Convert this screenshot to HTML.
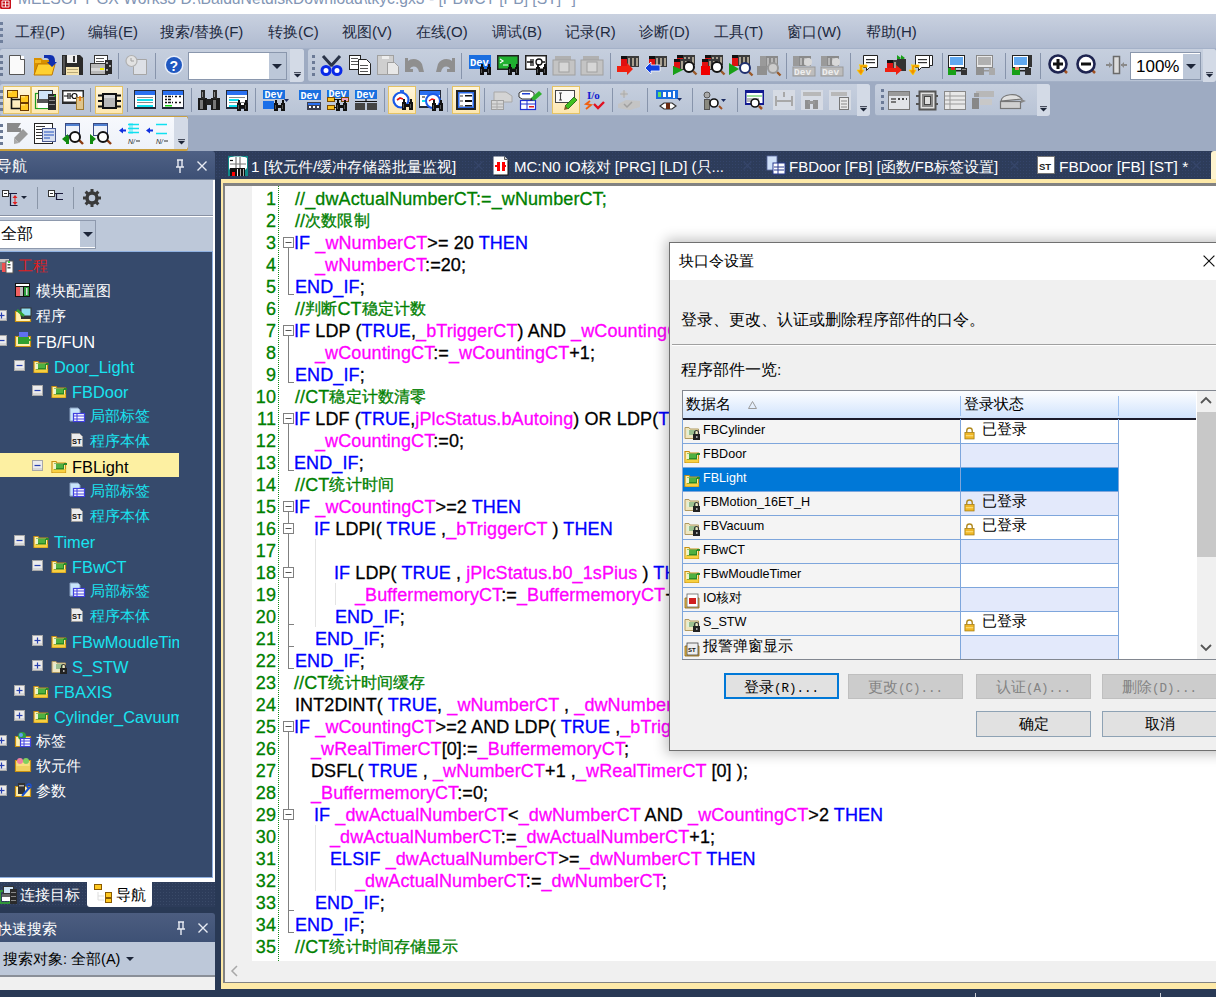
<!DOCTYPE html><html><head><meta charset="utf-8"><style>
*{margin:0;padding:0;box-sizing:border-box}
html,body{width:1216px;height:997px;overflow:hidden}
body{position:relative;background:#293955;font-family:"Liberation Sans",sans-serif;color:#000}
.a{position:absolute}
.t{white-space:pre}
svg{position:absolute;overflow:visible}
.code{position:absolute;font-size:18px;line-height:22px;height:22px;white-space:pre;letter-spacing:0.1px;-webkit-text-stroke:0.3px currentColor}
.k{color:#0000ff}.v{color:#ff00ff}.c{color:#008000}.n{color:#000}
.cj{font-size:15.7px;font-weight:300;position:relative;top:-1px}
.tree{position:absolute;font-size:16.4px;line-height:20px;white-space:pre;color:#fff}
.cy{color:#18e4f0}
</style></head><body><div class="a" style="left:0px;top:0px;width:1216px;height:14px;background:#fff;overflow:hidden"><svg style="position:absolute;left:0;top:0" width="12" height="10" viewBox="0 0 12 10"><rect x="0" y="-3" width="11" height="12" rx="1.5" fill="#c8101a"/><path d="M2 1h7v6H2zM5.5 1v6M2 4h7" fill="none" stroke="#fff" stroke-width="0.9"/></svg><div style="position:absolute;left:18px;top:-10px;font-size:15.7px;color:#8396b5;white-space:pre">MELSOFT GX Works3 D:\BaiduNetdiskDownload\tkyc.gx3 - [FBwCT [FB] [ST] *]</div></div>
<div class="a" style="left:0px;top:14px;width:1216px;height:35px;background:linear-gradient(#c9d1e0,#b0bbd0);border-bottom:1px solid #a4b1c8"></div>
<div class="a" style="left:0px;top:22px;width:3px;height:3px;background:#6f7f9c"></div>
<div class="a" style="left:0px;top:28px;width:3px;height:3px;background:#6f7f9c"></div>
<div class="a" style="left:0px;top:34px;width:3px;height:3px;background:#6f7f9c"></div>
<div class="a" style="left:0px;top:40px;width:3px;height:3px;background:#6f7f9c"></div>
<div class="a t" style="left:15px;top:23px;font-size:15px;color:#1e2a40;line-height:18px">工程(P)</div>
<div class="a t" style="left:88px;top:23px;font-size:15px;color:#1e2a40;line-height:18px">编辑(E)</div>
<div class="a t" style="left:160px;top:23px;font-size:15px;color:#1e2a40;line-height:18px">搜索/替换(F)</div>
<div class="a t" style="left:268px;top:23px;font-size:15px;color:#1e2a40;line-height:18px">转换(C)</div>
<div class="a t" style="left:342px;top:23px;font-size:15px;color:#1e2a40;line-height:18px">视图(V)</div>
<div class="a t" style="left:416px;top:23px;font-size:15px;color:#1e2a40;line-height:18px">在线(O)</div>
<div class="a t" style="left:492px;top:23px;font-size:15px;color:#1e2a40;line-height:18px">调试(B)</div>
<div class="a t" style="left:565px;top:23px;font-size:15px;color:#1e2a40;line-height:18px">记录(R)</div>
<div class="a t" style="left:639px;top:23px;font-size:15px;color:#1e2a40;line-height:18px">诊断(D)</div>
<div class="a t" style="left:714px;top:23px;font-size:15px;color:#1e2a40;line-height:18px">工具(T)</div>
<div class="a t" style="left:787px;top:23px;font-size:15px;color:#1e2a40;line-height:18px">窗口(W)</div>
<div class="a t" style="left:866px;top:23px;font-size:15px;color:#1e2a40;line-height:18px">帮助(H)</div>
<div class="a" style="left:0px;top:49px;width:1216px;height:102px;background:#9eabc2"></div>
<div class="a" style="left:0px;top:49px;width:304px;height:33px;background:linear-gradient(#c6cfde,#b9c4d6);border-bottom:1px solid #a3b0c6;border-radius:3px"></div>
<div class="a" style="left:308px;top:49px;width:908px;height:33px;background:linear-gradient(#c6cfde,#b9c4d6);border-bottom:1px solid #a3b0c6;border-radius:3px"></div>
<div class="a" style="left:0px;top:55px;width:3px;height:3px;background:#6b7a96"></div>
<div class="a" style="left:0px;top:61px;width:3px;height:3px;background:#6b7a96"></div>
<div class="a" style="left:0px;top:67px;width:3px;height:3px;background:#6b7a96"></div>
<div class="a" style="left:0px;top:73px;width:3px;height:3px;background:#6b7a96"></div>
<div class="a" style="left:118px;top:53px;width:1px;height:26px;background:#8794ab"></div>
<div class="a" style="left:155px;top:53px;width:1px;height:26px;background:#8794ab"></div>
<div class="a" style="left:188px;top:52px;width:99px;height:28px;background:#fff;border:1px solid #8a97ad"><div style="position:absolute;right:0;top:0;width:17px;height:26px;background:#bcc7d8"></div><div style="position:absolute;right:4px;top:11px;width:0;height:0;border-left:5px solid transparent;border-right:5px solid transparent;border-top:5px solid #1c2538"></div></div>
<div class="a" style="left:290px;top:49px;width:14px;height:33px;background:#d3dae6;border-radius:0 3px 3px 0"></div>
<svg style="left:293.5px;top:72px" width="7" height="6" viewBox="0 0 7 6"><rect x="0" y="0" width="7" height="1.2" fill="#4a5060"/><path d="M0 2h7l-3.5 3.5z" fill="#1c2538"/></svg>
<div class="a" style="left:312px;top:55px;width:3px;height:3px;background:#6b7a96"></div>
<div class="a" style="left:312px;top:61px;width:3px;height:3px;background:#6b7a96"></div>
<div class="a" style="left:312px;top:67px;width:3px;height:3px;background:#6b7a96"></div>
<div class="a" style="left:312px;top:73px;width:3px;height:3px;background:#6b7a96"></div>
<svg style="left:0;top:0" width="1216" height="997" viewBox="0 0 1216 997"><path d="M9.5 55.5h11l4 4v15h-15z" fill="#fafafa" stroke="#555" stroke-width="1"/><path d="M20.5 55.5v4h4" fill="#d8d8d8" stroke="#555" stroke-width="1"/><rect x="21" y="56" width="3" height="3" fill="#fff" /><path d="M34 58h7l2 2h9v15H34z" fill="#d89000" /><path d="M38 64h17l-3 11H34z" fill="#ffd030" stroke="#c07800" stroke-width="1"/><rect x="35" y="60" width="6" height="3" fill="#f5b820" /><path d="M44 55h6c4 0 5 3 5 6v1h2l-5 5-5-5h2v-1c0-2-1-3-3-3h-2z" fill="#1030b0" /><path d="M62 55h18l3 3v17H62z" fill="#2a2a2a" /><rect x="67" y="55" width="10" height="8" fill="#eee" /><rect x="73" y="56" width="2" height="6" fill="#333" /><rect x="66" y="67" width="13" height="8" fill="#f5e4b0" /><rect x="67" y="69" width="11" height="1" fill="#b8a878" /><rect x="67" y="72" width="11" height="1" fill="#b8a878" /><rect x="63" y="56" width="2" height="18" fill="#555" /><rect x="94.5" y="55.5" width="13" height="8" fill="#fff" stroke="#333" stroke-width="1"/><rect x="96" y="58" width="8" height="1" fill="#555" /><rect x="96" y="61" width="8" height="1" fill="#555" /><rect x="90.5" y="63.5" width="17" height="11" fill="#b8b8b8" stroke="#333" stroke-width="1"/><rect x="91" y="68" width="16" height="3" fill="#d8d8d8" /><rect x="100" y="68" width="4" height="2" fill="#f8f000" /><rect x="105" y="60" width="7" height="14" fill="#2a2a2a" /><rect x="106" y="62" width="2" height="2" fill="#aaa" /><rect x="109" y="65" width="2" height="2" fill="#aaa" /><rect x="106" y="69" width="2" height="2" fill="#aaa" /><path d="M133.5 59.5h13v15h-13z" fill="#dde0e6" stroke="#a6a6a6" stroke-width="1"/><circle cx="131.5" cy="61" r="5.5" fill="#e2e2e2" stroke="#b0b0b0" stroke-width="1.2"/><path d="M131 58v3h3" fill="none" stroke="#a0a0a0" stroke-width="1" /><circle cx="174" cy="65" r="9.5" fill="#e8eefa" /><circle cx="174" cy="65" r="8" fill="#2058c0" /><text x="169.5" y="70.5" font-family="Liberation Sans" font-weight="bold" font-size="14" fill="#fff">?</text><path d="M323 56l9 10M340 56l-9 10" fill="none" stroke="#2a3448" stroke-width="3" /><circle cx="326" cy="70.5" r="4" fill="#fff" stroke="#0a2ae8" stroke-width="3"/><circle cx="337" cy="70.5" r="4" fill="#fff" stroke="#0a2ae8" stroke-width="3"/><rect x="349.5" y="55.5" width="11" height="14" fill="#fff" stroke="#222" stroke-width="1"/><rect x="351" y="58" width="7" height="1" fill="#555" /><rect x="351" y="61" width="7" height="1" fill="#555" /><rect x="351" y="64" width="7" height="1" fill="#555" /><path d="M358.5 59.5h8l4 4v11h-12z" fill="#fff" stroke="#222" stroke-width="1"/><rect x="360" y="65" width="8" height="1" fill="#555" /><rect x="360" y="68" width="8" height="1" fill="#555" /><rect x="360" y="71" width="8" height="1" fill="#555" /><rect x="377.5" y="55.5" width="16" height="19" fill="#cfcfcf" stroke="#a0a0a0" stroke-width="1"/><rect x="382" y="56" width="7" height="3" fill="#eee" /><path d="M387.5 62.5h7l4 4v8h-11z" fill="#e8e8e8" stroke="#a0a0a0" stroke-width="1"/><path d="M405 58h3v3c3-3 11-3 14 3l2 8h-5c-1-6-7-7-9-3h3v3h-8z" fill="#8f8f8f" /><path d="M455 58h-3v3c-3-3-11-3-14 3l-2 8h5c1-6 7-7 9-3h-3v3h8z" fill="#8f8f8f" /><rect x="469" y="55" width="22" height="14" fill="#1a6ee0" /><text x="470" y="66" font-family="Liberation Mono" font-weight="bold" font-size="10.5" fill="#fff">Dev</text><rect x="480" y="67" width="4" height="8" fill="#111" /><rect x="487" y="67" width="4" height="8" fill="#111" /><rect x="483" y="69" width="5" height="3" fill="#111" /><rect x="481" y="64" width="2" height="4" fill="#111" /><rect x="488" y="64" width="2" height="4" fill="#111" /><rect x="481" y="69" width="1" height="4" fill="#555" /><rect x="488" y="69" width="1" height="4" fill="#555" /><rect x="497" y="55" width="22" height="15" fill="#222" /><rect x="498.5" y="56.5" width="19" height="12" fill="#20b030" /><path d="M500 59l3 2-3 2M503 65h5" fill="none" stroke="#fff" stroke-width="1.2" /><rect x="508" y="67" width="4" height="8" fill="#111" /><rect x="515" y="67" width="4" height="8" fill="#111" /><rect x="511" y="69" width="5" height="3" fill="#111" /><rect x="509" y="64" width="2" height="4" fill="#111" /><rect x="516" y="64" width="2" height="4" fill="#111" /><rect x="509" y="69" width="1" height="4" fill="#555" /><rect x="516" y="69" width="1" height="4" fill="#555" /><rect x="525" y="55" width="22" height="15" fill="#222" /><rect x="526.5" y="56.5" width="19" height="12" fill="#fff" /><path d="M527 62h6M531 59v7M533 59v7M536 62a3 3 0 1 0 6 0a3 3 0 1 0-6 0M542 62h3" fill="none" stroke="#111" stroke-width="1.3" /><rect x="536" y="67" width="4" height="8" fill="#111" /><rect x="543" y="67" width="4" height="8" fill="#111" /><rect x="539" y="69" width="5" height="3" fill="#111" /><rect x="537" y="64" width="2" height="4" fill="#111" /><rect x="544" y="64" width="2" height="4" fill="#111" /><rect x="537" y="69" width="1" height="4" fill="#555" /><rect x="544" y="69" width="1" height="4" fill="#555" /><rect x="555" y="56" width="16" height="6" fill="#b0b0b0" /><rect x="553" y="60" width="22" height="15" fill="#c4c4c4" stroke="#a0a0a0" stroke-width="1"/><rect x="559" y="62" width="10" height="10" fill="#d6d6d6" stroke="#a0a0a0" stroke-width="1"/><rect x="583" y="56" width="16" height="6" fill="#b0b0b0" /><rect x="581" y="60" width="22" height="15" fill="#c4c4c4" stroke="#a0a0a0" stroke-width="1"/><rect x="587" y="62" width="10" height="10" fill="#d6d6d6" stroke="#a0a0a0" stroke-width="1"/><rect x="621" y="56" width="18" height="11" fill="#3a3a3a" /><rect x="621" y="56" width="6" height="11" fill="#111" /><rect x="621" y="59" width="6" height="8" fill="#e01010" /><rect x="628" y="58" width="2" height="8" fill="#a8a090" /><rect x="632" y="58" width="2" height="8" fill="#a8a090" /><rect x="636" y="58" width="2" height="8" fill="#a8a090" /><path d="M617 66h10v-3l6 6-6 6v-3h-10z" fill="#f02010" /><rect x="649" y="56" width="18" height="11" fill="#3a3a3a" /><rect x="649" y="56" width="6" height="11" fill="#111" /><rect x="649" y="59" width="6" height="8" fill="#e01010" /><rect x="656" y="58" width="2" height="8" fill="#a8a090" /><rect x="660" y="58" width="2" height="8" fill="#a8a090" /><rect x="664" y="58" width="2" height="8" fill="#a8a090" /><path d="M660 65h-9v-3l-6 6 6 6v-3h9z" fill="#1040e0" stroke="#fff" stroke-width="0.8"/><rect x="677" y="55" width="18" height="10" fill="#3a3a3a" /><rect x="677" y="55" width="6" height="10" fill="#111" /><rect x="677" y="58" width="6" height="7" fill="#e01010" /><rect x="684" y="57" width="2" height="7" fill="#a8a090" /><rect x="688" y="57" width="2" height="7" fill="#a8a090" /><rect x="692" y="57" width="2" height="7" fill="#a8a090" /><rect x="674" y="59" width="18" height="11" fill="#3a3a3a" /><rect x="674" y="59" width="6" height="11" fill="#111" /><rect x="674" y="62" width="6" height="8" fill="#e01010" /><rect x="681" y="61" width="2" height="8" fill="#a8a090" /><rect x="685" y="61" width="2" height="8" fill="#a8a090" /><rect x="689" y="61" width="2" height="8" fill="#a8a090" /><path d="M673 66l10 4-10 5z" fill="#18a018" /><rect x="673" y="66" width="1" height="9" fill="#18a018" /><path d="M693 71l3.5 3.5" fill="none" stroke="#9a5a2a" stroke-width="2.4" /><circle cx="689" cy="67" r="5" fill="#fff" stroke="#111" stroke-width="2"/><rect x="705" y="55" width="18" height="10" fill="#3a3a3a" /><rect x="705" y="55" width="6" height="10" fill="#111" /><rect x="705" y="58" width="6" height="7" fill="#e01010" /><rect x="712" y="57" width="2" height="7" fill="#a8a090" /><rect x="716" y="57" width="2" height="7" fill="#a8a090" /><rect x="720" y="57" width="2" height="7" fill="#a8a090" /><rect x="702" y="59" width="18" height="11" fill="#3a3a3a" /><rect x="702" y="59" width="6" height="11" fill="#111" /><rect x="702" y="62" width="6" height="8" fill="#e01010" /><rect x="709" y="61" width="2" height="8" fill="#a8a090" /><rect x="713" y="61" width="2" height="8" fill="#a8a090" /><rect x="717" y="61" width="2" height="8" fill="#a8a090" /><rect x="701" y="66" width="9" height="9" fill="#f00000" /><path d="M721 71l3.5 3.5" fill="none" stroke="#9a5a2a" stroke-width="2.4" /><circle cx="717" cy="67" r="5" fill="#fff" stroke="#111" stroke-width="2"/><rect x="732" y="55" width="18" height="11" fill="#3a3a3a" /><rect x="732" y="55" width="6" height="11" fill="#111" /><rect x="732" y="58" width="6" height="8" fill="#e01010" /><rect x="739" y="57" width="2" height="8" fill="#a8a090" /><rect x="743" y="57" width="2" height="8" fill="#a8a090" /><rect x="747" y="57" width="2" height="8" fill="#a8a090" /><path d="M729 63l10 6-10 6z" fill="#18a018" /><path d="M749 72l3.5 3.5" fill="none" stroke="#9a5a2a" stroke-width="2.4" /><circle cx="745" cy="68" r="5" fill="#fff" stroke="#203070" stroke-width="2"/><rect x="760" y="56" width="18" height="11" fill="#8a8a8a" /><rect x="760" y="56" width="6" height="11" fill="#9a9a9a" /><rect x="767" y="58" width="2" height="8" fill="#b8b8b8" /><rect x="771" y="58" width="2" height="8" fill="#b8b8b8" /><rect x="775" y="58" width="2" height="8" fill="#b8b8b8" /><rect x="757" y="66" width="10" height="9" fill="#909090" /><path d="M777 72l3.5 3.5" fill="none" stroke="#9a5a2a" stroke-width="2.4" /><circle cx="773" cy="68" r="5" fill="#ccc" stroke="#999" stroke-width="2"/><rect x="793" y="56" width="18" height="10" fill="#8a8a8a" /><rect x="793" y="56" width="6" height="10" fill="#9a9a9a" /><rect x="800" y="58" width="2" height="7" fill="#b8b8b8" /><rect x="804" y="58" width="2" height="7" fill="#b8b8b8" /><rect x="808" y="58" width="2" height="7" fill="#b8b8b8" /><rect x="793" y="67" width="22" height="9" fill="#bdbdbd" stroke="#999" stroke-width="1"/><text x="794" y="75" font-family="Liberation Mono" font-weight="bold" font-size="9.5" fill="#eee">Dev</text><circle cx="808" cy="62" r="4" fill="#d8d8d8" /><rect x="821" y="56" width="18" height="10" fill="#8a8a8a" /><rect x="821" y="56" width="6" height="10" fill="#9a9a9a" /><rect x="828" y="58" width="2" height="7" fill="#b8b8b8" /><rect x="832" y="58" width="2" height="7" fill="#b8b8b8" /><rect x="836" y="58" width="2" height="7" fill="#b8b8b8" /><rect x="821" y="67" width="22" height="9" fill="#bdbdbd" stroke="#999" stroke-width="1"/><text x="822" y="75" font-family="Liberation Mono" font-weight="bold" font-size="9.5" fill="#eee">Dev</text><circle cx="836" cy="62" r="4" fill="#d8d8d8" /><path d="M863.5 55.5h14v12h-8l-3 3v-3h-3z" fill="#fff" stroke="#222" stroke-width="1"/><rect x="866" y="59" width="9" height="1.2" fill="#333" /><rect x="866" y="62" width="9" height="1.2" fill="#333" /><path d="M859 65h8v2h-5v3h2l-3 5-4-5h3v-5z" fill="#f09000" stroke="#ffd000" stroke-width="0.8"/><rect x="887" y="60" width="14" height="11" fill="#3a3a3a" /><rect x="887" y="60" width="6" height="11" fill="#111" /><rect x="887" y="63" width="6" height="8" fill="#e01010" /><rect x="894" y="62" width="2" height="8" fill="#a8a090" /><rect x="898" y="62" width="2" height="8" fill="#a8a090" /><rect x="902" y="62" width="2" height="8" fill="#a8a090" /><path d="M897 55l4 3-4 3zM901 55l4 3-4 3z" fill="#18a018" /><rect x="897" y="59" width="9" height="12" fill="#333" /><path d="M885 68h11v-3l6 5-6 5v-3h-11z" fill="#f02010" /><path d="M919.5 55.5h13v10h-13z" fill="#fff" stroke="#222" stroke-width="1"/><path d="M915.5 55.5h14v12h-8l-3 3v-3h-3z" fill="#fff" stroke="#222" stroke-width="1"/><rect x="918" y="59" width="9" height="1.2" fill="#333" /><rect x="918" y="62" width="9" height="1.2" fill="#333" /><path d="M911 65h8v2h-5v3h2l-3 5-4-5h3v-5z" fill="#f09000" stroke="#ffd000" stroke-width="0.8"/><rect x="948.5" y="55.5" width="16" height="12" fill="#fff" stroke="#222" stroke-width="1"/><rect x="950" y="57" width="13" height="8" fill="#60a8f0" /><rect x="948" y="68" width="8" height="7" fill="#18a018" /><rect x="951" y="67" width="4" height="3" fill="#e02020" /><rect x="956" y="70" width="5" height="1.5" fill="#222" /><rect x="961" y="68" width="6" height="7" fill="#333" /><rect x="962" y="69" width="4" height="1" fill="#888" /><rect x="976.5" y="55.5" width="16" height="12" fill="#e8e8e8" stroke="#888" stroke-width="1"/><rect x="978" y="57" width="13" height="8" fill="#b0b0b0" /><rect x="976" y="68" width="8" height="7" fill="#909090" /><rect x="984" y="70" width="5" height="1.5" fill="#999" /><rect x="989" y="68" width="6" height="7" fill="#aaa" /><rect x="1012.5" y="55.5" width="16" height="12" fill="#fff" stroke="#222" stroke-width="1"/><rect x="1014" y="57" width="13" height="8" fill="#60a8f0" /><rect x="1029" y="55" width="3" height="12" fill="#333" /><rect x="1012" y="68" width="8" height="7" fill="#18a018" /><rect x="1015" y="67" width="4" height="3" fill="#f08060" /><rect x="1020" y="70" width="5" height="1.5" fill="#222" /><rect x="1025" y="68" width="6" height="7" fill="#333" /><path d="M1064 70l3 3" fill="none" stroke="#a05020" stroke-width="2.5" /><circle cx="1058" cy="64" r="8.5" fill="#fff" stroke="#1e2450" stroke-width="2.6"/><rect x="1053" y="62.5" width="10" height="3" fill="#111" /><rect x="1056.5" y="59" width="3" height="10" fill="#111" /><path d="M1092 70l3 3" fill="none" stroke="#a05020" stroke-width="2.5" /><circle cx="1086" cy="64" r="8.5" fill="#fff" stroke="#1e2450" stroke-width="2.6"/><rect x="1081" y="62.5" width="10" height="3" fill="#111" /><rect x="1113.5" y="56.5" width="6" height="17" fill="#dcdcdc" stroke="#6a6a6a" stroke-width="1.5"/><rect x="1106" y="64" width="6" height="2" fill="#8a8a8a" /><rect x="1121" y="64" width="6" height="2" fill="#8a8a8a" /><path d="M1112 65l-3-3v6z" fill="#8a8a8a" /><path d="M1121 65l3-3v6z" fill="#8a8a8a" /></svg>
<div class="a" style="left:461px;top:53px;width:1px;height:26px;background:#8794ab"></div>
<div class="a" style="left:610px;top:53px;width:1px;height:26px;background:#8794ab"></div>
<div class="a" style="left:786px;top:53px;width:1px;height:26px;background:#8794ab"></div>
<div class="a" style="left:850px;top:53px;width:1px;height:26px;background:#8794ab"></div>
<div class="a" style="left:942px;top:53px;width:1px;height:26px;background:#8794ab"></div>
<div class="a" style="left:1005px;top:53px;width:1px;height:26px;background:#8794ab"></div>
<div class="a" style="left:1040px;top:53px;width:1px;height:26px;background:#8794ab"></div>
<div class="a" style="left:1130px;top:52px;width:71px;height:28px;background:#fff;border:1px solid #8a97ad"><div style="position:absolute;right:0;top:1px;width:17px;height:25px;background:#bcc7d8"></div><div style="position:absolute;right:4px;top:11px;width:0;height:0;border-left:5px solid transparent;border-right:5px solid transparent;border-top:5px solid #1c2538"></div><div style="position:absolute;left:5px;top:4px;font-size:17px;line-height:20px">100%</div></div>
<div class="a" style="left:1203px;top:49px;width:13px;height:33px;background:#d3dae6;border-radius:0 3px 3px 0"></div>
<svg style="left:1205.5px;top:72px" width="7" height="6" viewBox="0 0 7 6"><rect x="0" y="0" width="7" height="1.2" fill="#4a5060"/><path d="M0 2h7l-3.5 3.5z" fill="#1c2538"/></svg>
<div class="a" style="left:0px;top:84px;width:870px;height:32px;background:linear-gradient(#c6cfde,#b9c4d6);border-bottom:1px solid #a3b0c6;border-radius:3px"></div>
<div class="a" style="left:875px;top:84px;width:175px;height:32px;background:linear-gradient(#c6cfde,#b9c4d6);border-bottom:1px solid #a3b0c6;border-radius:3px"></div>
<div class="a" style="left:0px;top:90px;width:3px;height:3px;background:#6b7a96"></div>
<div class="a" style="left:0px;top:96px;width:3px;height:3px;background:#6b7a96"></div>
<div class="a" style="left:0px;top:102px;width:3px;height:3px;background:#6b7a96"></div>
<div class="a" style="left:0px;top:108px;width:3px;height:3px;background:#6b7a96"></div>
<div class="a" style="left:3px;top:86px;width:28px;height:28px;background:linear-gradient(#fff6dc,#fde7b0);border:1px solid #e5c365"></div>
<div class="a" style="left:31px;top:86px;width:28px;height:28px;background:linear-gradient(#fff6dc,#fde7b0);border:1px solid #e5c365"></div>
<div class="a" style="left:95px;top:86px;width:28px;height:28px;background:linear-gradient(#fff6dc,#fde7b0);border:1px solid #e5c365"></div>
<div class="a" style="left:388px;top:86px;width:28px;height:28px;background:linear-gradient(#fff6dc,#fde7b0);border:1px solid #e5c365"></div>
<div class="a" style="left:452px;top:86px;width:28px;height:28px;background:linear-gradient(#fff6dc,#fde7b0);border:1px solid #e5c365"></div>
<div class="a" style="left:552px;top:86px;width:28px;height:28px;background:linear-gradient(#fff6dc,#fde7b0);border:1px solid #e5c365"></div>
<svg style="left:0;top:0" width="1216" height="997" viewBox="0 0 1216 997"><path d="M11.5 97v11.5h9M11.5 99.5h9" fill="none" stroke="#111" stroke-width="1.6" /><rect x="7.5" y="90.5" width="10" height="7" fill="#ffc820" stroke="#6a3a00" stroke-width="1"/><rect x="8" y="91" width="4" height="1.5" fill="#ffe070" /><rect x="20.5" y="95.5" width="8" height="7" fill="#ffc820" stroke="#6a3a00" stroke-width="1"/><rect x="21" y="96" width="4" height="1.5" fill="#ffe070" /><rect x="20.5" y="103.5" width="8" height="7" fill="#ffc820" stroke="#6a3a00" stroke-width="1"/><rect x="21" y="104" width="4" height="1.5" fill="#ffe070" /><rect x="35.5" y="93.5" width="12" height="15" fill="none" stroke="#20a020" stroke-width="1.2"/><rect x="38.5" y="90.5" width="14" height="9" fill="#cfe4f8" stroke="#333" stroke-width="1"/><rect x="37" y="99" width="11" height="4" fill="#555" /><rect x="38" y="103" width="10" height="5" fill="#fff" /><rect x="48" y="94" width="8" height="16" fill="#2a2a2a" /><rect x="49" y="96" width="6" height="1" fill="#888" /><rect x="49" y="100" width="6" height="1" fill="#888" /><rect x="49" y="104" width="6" height="1" fill="#888" /><rect x="54" y="95" width="1.5" height="1.5" fill="#0c0" /><rect x="62" y="90" width="22" height="14" fill="#2a2a2a" /><rect x="63.5" y="91.5" width="19" height="10" fill="#fff" /><path d="M64 96h4M68 93v6M70 93v6M70 96h2M72 96a2.5 2.5 0 1 0 5 0a2.5 2.5 0 1 0-5 0" fill="none" stroke="#111" stroke-width="1.2" /><rect x="76.5" y="97.5" width="7" height="12" fill="#e0c48a" stroke="#a07a30" stroke-width="1"/><path d="M80 96v5" fill="none" stroke="#f07000" stroke-width="1.5" /><path d="M98 95.5h4M98 101h4M98 106.5h4M117 95.5h4M117 101h4M117 106.5h4" fill="none" stroke="#111" stroke-width="2.2" /><rect x="102" y="93" width="15" height="16" fill="#111" /><rect x="104" y="95" width="11" height="12" fill="#b8b8b8" /><rect x="104" y="95" width="11" height="3" fill="#d8d8d8" /><rect x="134" y="90" width="22" height="19" fill="#222838" /><rect x="135" y="91" width="20" height="16" fill="#fff" /><rect x="135" y="91" width="20" height="4" fill="#2a70f0" /><rect x="137" y="97" width="16" height="1" fill="#888" /><rect x="137" y="99" width="16" height="2" fill="#10e0f0" /><rect x="137" y="102" width="16" height="1" fill="#888" /><rect x="137" y="105" width="16" height="2" fill="#10e0f0" /><rect x="162" y="90" width="22" height="19" fill="#222838" /><rect x="163" y="91" width="20" height="16" fill="#fff" /><rect x="163" y="91" width="20" height="4" fill="#2a70f0" /><path d="M165 96.5h2M168 96.5h3M172 96.5h1M175 96.5h2M179 96.5h2M165 99.5h2M168 99.5h3M165 102.5h2M168 102.5h3M172 102.5h1M175 102.5h2M179 102.5h2" fill="none" stroke="#111" stroke-width="1.5" /><rect x="165" y="105" width="7" height="1.5" fill="#10d010" /><rect x="198" y="98" width="9" height="12" fill="#1a1a1a" /><rect x="211" y="98" width="9" height="12" fill="#1a1a1a" /><rect x="206" y="99" width="6" height="6" fill="#222" /><rect x="201" y="90" width="4" height="9" fill="#2a2a2a" /><rect x="213" y="90" width="4" height="9" fill="#2a2a2a" /><rect x="200" y="100" width="3" height="9" fill="#777" /><rect x="213" y="100" width="3" height="9" fill="#777" /><rect x="202" y="92" width="1" height="5" fill="#888" /><rect x="214" y="92" width="1" height="5" fill="#888" /><rect x="226" y="90" width="22" height="19" fill="#222838" /><rect x="227" y="91" width="20" height="16" fill="#fff" /><rect x="227" y="91" width="20" height="4" fill="#2a70f0" /><rect x="229" y="97" width="16" height="1" fill="#888" /><rect x="229" y="99" width="10" height="2" fill="#10e0f0" /><rect x="229" y="102" width="16" height="1" fill="#888" /><rect x="229" y="105" width="10" height="2" fill="#10e0f0" /><rect x="237" y="103" width="4" height="8" fill="#111" /><rect x="244" y="103" width="4" height="8" fill="#111" /><rect x="240" y="105" width="5" height="3" fill="#111" /><rect x="238" y="100" width="2" height="4" fill="#111" /><rect x="245" y="100" width="2" height="4" fill="#111" /><rect x="238" y="105" width="1" height="4" fill="#555" /><rect x="245" y="105" width="1" height="4" fill="#555" /><rect x="263" y="90" width="22" height="9" fill="#1a70e0" /><text x="264.5" y="98" font-family="Liberation Mono" font-weight="bold" font-size="10" fill="#fff">Dev</text><rect x="263" y="101" width="11" height="8" fill="#1a6ee8" /><rect x="274" y="103" width="4" height="8" fill="#111" /><rect x="281" y="103" width="4" height="8" fill="#111" /><rect x="277" y="105" width="5" height="3" fill="#111" /><rect x="275" y="100" width="2" height="4" fill="#111" /><rect x="282" y="100" width="2" height="4" fill="#111" /><rect x="275" y="105" width="1" height="4" fill="#555" /><rect x="282" y="105" width="1" height="4" fill="#555" /><path d="M284 99h5l-2.5 3z" fill="#1a2a60" /><rect x="299" y="90" width="22" height="10" fill="#1a70e0" /><text x="300.5" y="99" font-family="Liberation Mono" font-weight="bold" font-size="10" fill="#fff">Dev</text><rect x="307" y="102" width="14" height="8" fill="#3a3e50" /><rect x="308" y="103" width="12" height="2" fill="#2a70f0" /><rect x="309" y="106" width="2" height="2" fill="#fff" /><rect x="313" y="106" width="2" height="2" fill="#fff" /><rect x="317" y="106" width="2" height="2" fill="#fff" /><rect x="327" y="90" width="22" height="8" fill="#1a70e0" /><text x="328.5" y="97" font-family="Liberation Mono" font-weight="bold" font-size="10" fill="#fff">Dev</text><rect x="327.5" y="97.5" width="7" height="4" fill="#f8c020" stroke="#7a4a00" stroke-width="1"/><rect x="327.5" y="105.5" width="7" height="4" fill="#f8c020" stroke="#7a4a00" stroke-width="1"/><rect x="341.5" y="97.5" width="7" height="4" fill="#f0a0c0" stroke="#7a4a00" stroke-width="1"/><rect x="336" y="103" width="4" height="8" fill="#111" /><rect x="343" y="103" width="4" height="8" fill="#111" /><rect x="339" y="105" width="5" height="3" fill="#111" /><rect x="337" y="100" width="2" height="4" fill="#111" /><rect x="344" y="100" width="2" height="4" fill="#111" /><rect x="337" y="105" width="1" height="4" fill="#555" /><rect x="344" y="105" width="1" height="4" fill="#555" /><rect x="334" y="99" width="7" height="1" fill="#111" /><rect x="334" y="107" width="3" height="1" fill="#111" /><rect x="355" y="90" width="22" height="9" fill="#1a70e0" /><text x="356.5" y="98" font-family="Liberation Mono" font-weight="bold" font-size="10" fill="#fff">Dev</text><path d="M355 101.5h22M366 99v3" fill="none" stroke="#111" stroke-width="1.2" /><rect x="355" y="103" width="10" height="7" fill="#444" /><rect x="367" y="103" width="10" height="7" fill="#444" /><rect x="400" y="90" width="4" height="3" fill="#2a6ae8" /><circle cx="401" cy="100" r="7.5" fill="#fff" stroke="#1a5ae8" stroke-width="2.2"/><path d="M397 100l3-2 3 1" fill="none" stroke="#e01010" stroke-width="1.6" /><rect x="402" y="102" width="4" height="8" fill="#111" /><rect x="409" y="102" width="4" height="8" fill="#111" /><rect x="405" y="104" width="5" height="3" fill="#111" /><rect x="403" y="99" width="2" height="4" fill="#111" /><rect x="410" y="99" width="2" height="4" fill="#111" /><rect x="403" y="104" width="1" height="4" fill="#555" /><rect x="410" y="104" width="1" height="4" fill="#555" /><rect x="419" y="90" width="22" height="18" fill="#222838" /><rect x="420" y="91" width="20" height="15" fill="#fff" /><rect x="420" y="91" width="20" height="4" fill="#2a70f0" /><rect x="422" y="96" width="3" height="2" fill="#888" /><rect x="422" y="100" width="3" height="2" fill="#10e0f0" /><circle cx="433" cy="101" r="7" fill="#fff" stroke="#1a5ae8" stroke-width="2"/><path d="M429 101l3-2 3 1" fill="none" stroke="#e01010" stroke-width="1.5" /><rect x="432" y="103" width="4" height="8" fill="#111" /><rect x="439" y="103" width="4" height="8" fill="#111" /><rect x="435" y="105" width="5" height="3" fill="#111" /><rect x="433" y="100" width="2" height="4" fill="#111" /><rect x="440" y="100" width="2" height="4" fill="#111" /><rect x="433" y="105" width="1" height="4" fill="#555" /><rect x="440" y="105" width="1" height="4" fill="#555" /><rect x="456" y="90" width="20" height="20" fill="#222" /><rect x="458" y="92" width="16" height="16" fill="#2a6ae8" /><rect x="459.5" y="93.5" width="13" height="13" fill="#fff" /><rect x="460" y="95" width="3" height="2" fill="#999" /><rect x="460" y="100" width="3" height="2" fill="#999" /><rect x="460" y="105" width="3" height="2" fill="#999" /><rect x="465" y="95" width="7" height="1.5" fill="#111" /><rect x="465" y="100" width="7" height="2" fill="#111" /><rect x="465" y="105" width="7" height="1.5" fill="#111" /><path d="M494 92h12l6 4v6h-18z" fill="#d4d4d4" stroke="#a8a8a8" stroke-width="1"/><rect x="491.5" y="100.5" width="12" height="9" fill="#d8d8d8" stroke="#a0a0a0" stroke-width="1"/><path d="M492 104h11M492 107h11M497 100v10" fill="none" stroke="#aaa" stroke-width="1" /><path d="M522 91h9l3 2v4l-3 2h-9l-3-2v-4z" fill="#fff" stroke="#333" stroke-width="1"/><rect x="522" y="93" width="8" height="1.5" fill="#2040d0" /><rect x="520.5" y="100.5" width="15" height="9" fill="#fff" stroke="#2030d0" stroke-width="1.2"/><path d="M520 104h15M527 100v10" fill="none" stroke="#2030d0" stroke-width="1" /><rect x="529" y="106" width="5" height="1.5" fill="#e02020" /><path d="M531 98l8-7 3 3-8 7z" fill="#30b030" /><path d="M531 98l-1 3 3-1z" fill="#333" /><rect x="555.5" y="90.5" width="19" height="12" fill="#fafafa" stroke="#444" stroke-width="1"/><path d="M559 93h3M560.5 93v7M559 100h3" fill="none" stroke="#444" stroke-width="1.1" /><path d="M565 106l9-9 3 3-9 9z" fill="#40c020" stroke="#1a6010" stroke-width="0.8"/><path d="M565 106l-1 4 4-1z" fill="#806020" /><text x="587" y="99" font-family="Liberation Serif" font-weight="bold" font-size="11" fill="#1020d0">I/o</text><path d="M590 101l-4 3 5 1-5 4" fill="none" stroke="#f06010" stroke-width="1.8" /><path d="M594 104l4 4 6-6" fill="none" stroke="#e01020" stroke-width="2.4" /><circle cx="624" cy="94" r="3" fill="#c8c8c8" /><path d="M624 90v8M620 94h8" fill="none" stroke="#aaa" stroke-width="1" /><path d="M618 104l8-4 14 1v6l-10 3-12-2z" fill="#c4c4c4" /><path d="M624 104l3 3 5-5" fill="none" stroke="#a0a0a0" stroke-width="1.5" /><rect x="656" y="90" width="22" height="9" fill="#1a6ee0" /><rect x="658" y="92" width="3" height="5" fill="#60e060" /><rect x="663" y="92" width="3" height="5" fill="#fff" /><rect x="668" y="92" width="3" height="5" fill="#fff" /><rect x="673" y="91" width="2" height="7" fill="#fff" /><path d="M677 98h5l-2.5 3z" fill="#1a2a60" /><path d="M664 103h8l4 3-4 3h-8l-4-3z" fill="#fff" stroke="#333" stroke-width="1.2"/><rect x="666" y="103" width="4" height="6" fill="#6a2a10" /><circle cx="707" cy="95" r="3" fill="#aaa" stroke="#555" stroke-width="1"/><rect x="704" y="99" width="6" height="11" fill="#555" /><rect x="705" y="100" width="4" height="9" fill="#8a8a80" /><path d="M719 106l3 3" fill="none" stroke="#a05020" stroke-width="2" /><circle cx="714" cy="103" r="4" fill="#fff" stroke="#111" stroke-width="1.6"/><path d="M721 99h5l-2.5 3z" fill="#1a2a60" /><rect x="745" y="90" width="19" height="15" fill="#111a90" /><rect x="746.5" y="93" width="16" height="10" fill="#fff" /><rect x="747" y="95" width="15" height="2" fill="#a0e0a0" /><rect x="747" y="98" width="12" height="4" fill="#b8b8b8" /><path d="M759 106l3 3" fill="none" stroke="#a05020" stroke-width="2.5" /><circle cx="755" cy="103" r="4" fill="#fff" stroke="#111" stroke-width="1.6"/><rect x="773" y="90" width="22" height="20" fill="#d6dbe4" /><rect x="801" y="90" width="22" height="20" fill="#d6dbe4" /><rect x="829" y="90" width="22" height="20" fill="#d6dbe4" /><path d="M775 101h18M776 96v10M792 96v10M784 92v5" fill="none" stroke="#a8a8a8" stroke-width="2" /><rect x="803" y="92" width="18" height="4" fill="#b8b8b8" /><rect x="805" y="100" width="5" height="9" fill="#909090" /><rect x="813" y="100" width="5" height="9" fill="#909090" /><rect x="808" y="101" width="7" height="3" fill="#999" /><rect x="831" y="92" width="16" height="4" fill="#b8b8b8" /><rect x="839.5" y="97.5" width="9" height="12" fill="#e8e8e8" stroke="#777" stroke-width="1"/><path d="M841 101h6M841 104h6M841 107h6" fill="none" stroke="#888" stroke-width="1" /><rect x="888.5" y="91.5" width="21" height="18" fill="#e2e4e8" stroke="#777" stroke-width="1"/><rect x="889" y="92" width="20" height="4" fill="#9a9a9a" /><rect x="891" y="98" width="5" height="2" fill="#777" /><rect x="891" y="101" width="5" height="2" fill="#777" /><path d="M898 99h2M902 99h2M906 99h1" fill="none" stroke="#444" stroke-width="2" /><rect x="919.5" y="91.5" width="16" height="18" fill="#e0e0e0" stroke="#555" stroke-width="2"/><rect x="922" y="94" width="11" height="13" fill="#888" /><rect x="924.5" y="96.5" width="6" height="8" fill="#ddd" stroke="#444" stroke-width="1"/><path d="M916 96h3M916 104h3M936 96h2M936 104h2" fill="none" stroke="#555" stroke-width="2" /><rect x="944.5" y="91.5" width="21" height="18" fill="#e8e8e8" stroke="#888" stroke-width="1"/><path d="M945 96h20M945 100h20M945 104h20M950 92v17" fill="none" stroke="#999" stroke-width="1" /><rect x="972" y="98" width="7" height="11" fill="#888" /><rect x="976" y="91" width="18" height="6" fill="#b8b8b8" /><rect x="974" y="93" width="5" height="4" fill="#999" /><rect x="980" y="99" width="12" height="6" fill="#c8c8c8" /><path d="M1001 101c1-7 16-9 21-2z" fill="#e0e0e0" stroke="#777" stroke-width="1.2"/><rect x="1000.5" y="101.5" width="20" height="7" fill="#d0d0d0" stroke="#777" stroke-width="1.2"/><path d="M1021 99l5 2-5 2z" fill="#888" /></svg>
<div class="a" style="left:90px;top:88px;width:1px;height:24px;background:#8794ab"></div>
<div class="a" style="left:127px;top:88px;width:1px;height:24px;background:#8794ab"></div>
<div class="a" style="left:191px;top:88px;width:1px;height:24px;background:#8794ab"></div>
<div class="a" style="left:255px;top:88px;width:1px;height:24px;background:#8794ab"></div>
<div class="a" style="left:384px;top:88px;width:1px;height:24px;background:#8794ab"></div>
<div class="a" style="left:447px;top:88px;width:1px;height:24px;background:#8794ab"></div>
<div class="a" style="left:484px;top:88px;width:1px;height:24px;background:#8794ab"></div>
<div class="a" style="left:547px;top:88px;width:1px;height:24px;background:#8794ab"></div>
<div class="a" style="left:612px;top:88px;width:1px;height:24px;background:#8794ab"></div>
<div class="a" style="left:647px;top:88px;width:1px;height:24px;background:#8794ab"></div>
<div class="a" style="left:692px;top:88px;width:1px;height:24px;background:#8794ab"></div>
<div class="a" style="left:737px;top:88px;width:1px;height:24px;background:#8794ab"></div>
<div class="a" style="left:857px;top:84px;width:13px;height:32px;background:#d3dae6;border-radius:0 3px 3px 0"></div>
<svg style="left:859.5px;top:106px" width="7" height="6" viewBox="0 0 7 6"><rect x="0" y="0" width="7" height="1.2" fill="#4a5060"/><path d="M0 2h7l-3.5 3.5z" fill="#1c2538"/></svg>
<div class="a" style="left:881px;top:89px;width:3px;height:3px;background:#6b7a96"></div>
<div class="a" style="left:881px;top:95px;width:3px;height:3px;background:#6b7a96"></div>
<div class="a" style="left:881px;top:101px;width:3px;height:3px;background:#6b7a96"></div>
<div class="a" style="left:881px;top:107px;width:3px;height:3px;background:#6b7a96"></div>
<div class="a" style="left:1037px;top:84px;width:13px;height:32px;background:#d3dae6;border-radius:0 3px 3px 0"></div>
<svg style="left:1039.5px;top:106px" width="7" height="6" viewBox="0 0 7 6"><rect x="0" y="0" width="7" height="1.2" fill="#4a5060"/><path d="M0 2h7l-3.5 3.5z" fill="#1c2538"/></svg>
<div class="a" style="left:0px;top:116px;width:188px;height:35px;background:linear-gradient(#f7f9fd,#eef2f9);border-top:1px solid #c9a040;border-bottom:2px solid #c9a040;border-right:1px solid #c9a040;border-radius:0 2px 2px 0"></div>
<div class="a" style="left:0px;top:124px;width:3px;height:3px;background:#6b7a96"></div>
<div class="a" style="left:0px;top:130px;width:3px;height:3px;background:#6b7a96"></div>
<div class="a" style="left:0px;top:136px;width:3px;height:3px;background:#6b7a96"></div>
<div class="a" style="left:0px;top:142px;width:3px;height:3px;background:#6b7a96"></div>
<svg style="left:0;top:0" width="1216" height="997" viewBox="0 0 1216 997"><path d="M7 123h14l-3 5h3v4H7z" fill="#8a8a8a" /><path d="M14 138l9-9 5 5-9 9z" fill="#9a9a9a" /><path d="M14 138l-0 6 5-1z" fill="#aaa" /><rect x="34.5" y="123.5" width="18" height="20" fill="#fff" stroke="#222" stroke-width="1"/><path d="M36 126.5h9M36 129.5h13M36 132.5h6M36 135.5h6M36 138.5h6" fill="none" stroke="#333" stroke-width="1" /><rect x="42.5" y="128.5" width="13" height="13" fill="#d8e0f0" stroke="#4a5a90" stroke-width="1"/><path d="M44 132h10M44 135h10M44 138h6" fill="none" stroke="#2050c0" stroke-width="1.2" /><rect x="65.5" y="123.5" width="14" height="12" fill="#eef2fa" stroke="#3a4a80" stroke-width="1"/><rect x="66" y="124" width="13" height="2" fill="#5080d0" /><path d="M62 139l6-5v10z" fill="#108a10" /><rect x="66" y="136" width="3" height="8" fill="#108a10" /><path d="M79 140l4 4" fill="none" stroke="#8a3a10" stroke-width="2.4" /><circle cx="75" cy="137" r="5" fill="#fff" stroke="#111" stroke-width="2"/><rect x="93.5" y="123.5" width="14" height="12" fill="#eef2fa" stroke="#3a4a80" stroke-width="1"/><rect x="94" y="124" width="13" height="2" fill="#5080d0" /><path d="M96 139l-6-5v10z" fill="#108a10" /><rect x="90" y="136" width="3" height="8" fill="#108a10" /><path d="M107 140l4 4" fill="none" stroke="#8a3a10" stroke-width="2.4" /><circle cx="103" cy="137" r="5" fill="#fff" stroke="#111" stroke-width="2"/><path d="M119 130.5l4-3v2h3v2h-3v2z" fill="#1030e0" /><path d="M128 124.5h11M128 128.5h11M128 132.5h11" fill="none" stroke="#10e0f0" stroke-width="1.3" /><path d="M130 123v11M132 123v11" fill="none" stroke="#10e0f0" stroke-width="0.8" /><text x="128" y="144" font-family="Liberation Sans" font-style="italic" font-size="7" fill="#333">N/</text><rect x="136" y="140.5" width="4" height="1" fill="#333" /><path d="M146 130.5l4-3v2h3v2h-3v2z" fill="#1030e0" /><path d="M156 124.5h11M156 133.5h11" fill="none" stroke="#10e0f0" stroke-width="1.3" /><text x="156" y="144" font-family="Liberation Sans" font-style="italic" font-size="7" fill="#333">N/</text><rect x="164" y="140.5" width="4" height="1" fill="#333" /></svg>
<div class="a" style="left:174px;top:117px;width:14px;height:32px;background:#d3dae6;border-radius:0 3px 3px 0"></div>
<svg style="left:177.5px;top:139px" width="7" height="6" viewBox="0 0 7 6"><rect x="0" y="0" width="7" height="1.2" fill="#4a5060"/><path d="M0 2h7l-3.5 3.5z" fill="#1c2538"/></svg>
<div class="a" style="left:0px;top:151px;width:215px;height:28px;background:linear-gradient(#4f6185,#3d5075);border-radius:0 3px 0 0"></div>
<div class="a t" style="left:-3px;top:157px;font-size:15px;line-height:18px;color:#fff">导航</div>
<svg style="left:175px;top:159px" width="10" height="14" viewBox="0 0 10 14"><path d="M2 1h6M3 1v7M7 1v7M1 8h8M5 8v6" fill="none" stroke="#e8ecf4" stroke-width="1.4"/></svg>
<svg style="left:197px;top:161px" width="10" height="10" viewBox="0 0 10 10"><path d="M0.5 0.5L9.5 9.5M9.5 0.5L0.5 9.5" fill="none" stroke="#e8ecf4" stroke-width="1.4"/></svg>
<div class="a" style="left:0px;top:179px;width:215px;height:1px;background:#76839a"></div>
<div class="a" style="left:0px;top:180px;width:213px;height:35px;background:#bdc8d9"></div>
<svg style="left:0;top:186px" width="30" height="24" viewBox="0 0 30 24"><rect x="2.5" y="4.5" width="6" height="6" fill="#fff" stroke="#333" stroke-width="1"/><path d="M4 7.5h3" stroke="#333" stroke-width="1"/><path d="M9 7.5h8M10.5 7v12.5h7" fill="none" stroke="#1a1a3a" stroke-width="1.2"/><path d="M15 9l-2.5 3h5zM15 19l-2.5-3h5z" fill="#e02020"/><path d="M15 11v6" stroke="#e02020" stroke-width="1"/><path d="M21 10h6l-3 3z" fill="#1c2538"/></svg>
<div class="a" style="left:37px;top:187px;width:1px;height:22px;background:#8a96a8"></div>
<svg style="left:46px;top:186px" width="20" height="16" viewBox="0 0 20 16"><rect x="2.5" y="4.5" width="6" height="6" fill="#fff" stroke="#333" stroke-width="1"/><path d="M4 7.5h3" stroke="#333" stroke-width="1"/><path d="M9 7.5h8M10.5 7v6.5h6.5" fill="none" stroke="#1a1a3a" stroke-width="1.2"/></svg>
<div class="a" style="left:73px;top:187px;width:1px;height:22px;background:#8a96a8"></div>
<svg style="left:83px;top:189px" width="18" height="18" viewBox="0 0 18 18"><circle cx="9" cy="9" r="5" fill="none" stroke="#3a3a3a" stroke-width="3.5"/><path d="M9 0v4M9 14v4M0 9h4M14 9h4M2.6 2.6l2.8 2.8M12.6 12.6l2.8 2.8M2.6 15.4l2.8-2.8M12.6 5.4l2.8-2.8" stroke="#3a3a3a" stroke-width="3"/></svg>
<div class="a" style="left:0px;top:215px;width:213px;height:1px;background:#8891a3"></div>
<div class="a" style="left:0px;top:216px;width:213px;height:1px;background:#fff"></div>
<div class="a" style="left:0px;top:217px;width:213px;height:34px;background:#bdc8d9"></div>
<div class="a" style="left:-2px;top:220px;width:98px;height:29px;background:#fff;border:1px solid #8e99ad"><div style="position:absolute;right:0;top:0;width:15px;height:26px;background:#bcc7d8"></div><div style="position:absolute;right:2px;top:11px;width:0;height:0;border-left:5px solid transparent;border-right:5px solid transparent;border-top:5px solid #1c2538"></div></div>
<div class="a t" style="left:1px;top:225px;font-size:16px;line-height:18px">全部</div>
<div class="a" style="left:0px;top:251px;width:213px;height:1px;background:#8fb0e0"></div>
<div class="a" style="left:0px;top:252px;width:212px;height:625px;background:#364a6c"></div>
<div class="a" style="left:212px;top:252px;width:1px;height:626px;background:#8fb0e0"></div>
<div class="a" style="left:213px;top:180px;width:2px;height:702px;background:#fff"></div>
<div class="a" style="left:0px;top:877px;width:213px;height:1px;background:#8fb0e0"></div>
<div class="a" style="left:0px;top:878px;width:215px;height:4px;background:#fff"></div>
<div class="a" style="left:0px;top:453px;width:179px;height:24px;background:#fdf0a2"></div>
<div class="a" style="left:0;top:252px;width:179px;height:625px;overflow:hidden">
<svg style="left:0;top:0" width="179" height="625" viewBox="0 0 179 625"><rect x="0" y="7" width="9" height="11" fill="#888"/><rect x="0" y="7" width="9" height="3" fill="#ccc"/><rect x="2" y="11" width="4" height="9" fill="#f05050"/><rect x="6" y="9" width="7" height="12" fill="#fff" stroke="#555" stroke-width="1"/><rect x="7.5" y="12" width="3" height="1.5" fill="#555"/><rect x="7.5" y="15" width="3" height="1.5" fill="#555"/><rect x="8" y="9" width="2" height="2" fill="#40d040"/><rect x="15" y="31" width="15" height="14" fill="#111"/><rect x="16" y="32" width="13" height="2" fill="#fff"/><rect x="16" y="35" width="4" height="9" fill="#f06060"/><rect x="20" y="35" width="3" height="9" fill="#bbb"/><rect x="24" y="35" width="5" height="9" fill="#2a9a3a"/><rect x="26" y="36" width="1.5" height="7" fill="#ddd"/><rect x="-3.5" y="58.5" width="10" height="10" fill="#ececec" stroke="#a8a8a8" stroke-width="1"/><rect x="-3" y="66" width="9" height="2" fill="#d8d8d8"/><path d="M-1.5 63.5h6" stroke="#2840b0" stroke-width="1.2"/><path d="M1.5 60.5v6" stroke="#2840b0" stroke-width="1.2"/><path d="M15.5 59.5h15v10h-15z" fill="#fff0b0" stroke="#c89010" stroke-width="1.2"/><rect x="21" y="56" width="10" height="8" fill="#90e0f0" stroke="#333" stroke-width="1"/><rect x="21" y="64" width="10" height="3" fill="#333"/><path d="M17 58l7 6" stroke="#30a030" stroke-width="2.5"/><rect x="-3.5" y="83.5" width="10" height="10" fill="#ececec" stroke="#a8a8a8" stroke-width="1"/><rect x="-3" y="91" width="9" height="2" fill="#d8d8d8"/><path d="M-1.5 88.5h6" stroke="#2840b0" stroke-width="1.2"/><path d="M15.5 84.5h15v10h-15z" fill="#fff0b0" stroke="#c89010" stroke-width="1.2"/><rect x="19" y="80" width="9" height="5" fill="#6070f0"/><rect x="18" y="85" width="11" height="7" fill="#30a030"/><rect x="28" y="87" width="3" height="2" fill="#30a030"/><rect x="14.5" y="108.5" width="10" height="10" fill="#ececec" stroke="#a8a8a8" stroke-width="1"/><rect x="15" y="116" width="9" height="2" fill="#d8d8d8"/><path d="M16.5 113.5h6" stroke="#2840b0" stroke-width="1.2"/><path d="M34 109.5h4l1 1.5h8.5v9.5h-13.5z" fill="#fff2b0" stroke="#c89010" stroke-width="1.2"/><rect x="34.5" y="117" width="13" height="3.5" fill="#f8d040"/><rect x="36" y="111.5" width="10" height="6" fill="#2a8a2a"/><rect x="38" y="112" width="7" height="4" fill="#50b040"/><rect x="36" y="112" width="2" height="5" fill="#e8f4d0"/><rect x="46" y="111" width="3" height="2" fill="#2a8a2a"/><rect x="32.5" y="133.5" width="10" height="10" fill="#ececec" stroke="#a8a8a8" stroke-width="1"/><rect x="33" y="141" width="9" height="2" fill="#d8d8d8"/><path d="M34.5 138.5h6" stroke="#2840b0" stroke-width="1.2"/><path d="M52 134.5h4l1 1.5h8.5v9.5h-13.5z" fill="#fff2b0" stroke="#c89010" stroke-width="1.2"/><rect x="52.5" y="142" width="13" height="3.5" fill="#f8d040"/><rect x="54" y="136.5" width="10" height="6" fill="#2a8a2a"/><rect x="56" y="137" width="7" height="4" fill="#50b040"/><rect x="54" y="137" width="2" height="5" fill="#e8f4d0"/><rect x="64" y="136" width="3" height="2" fill="#2a8a2a"/><path d="M70 156h8l2 2v11h-10z" fill="#c8e4fa" stroke="#8aa0c0" stroke-width="1"/><rect x="73.5" y="161.5" width="11" height="8" fill="#fff" stroke="#4040e0" stroke-width="1.2"/><path d="M74 164h10M74 167h10M77 162v7" stroke="#4040e0" stroke-width="1"/><path d="M71.5 181.5h8l3 3v10h-11z" fill="#ececec" stroke="#9a9a9a" stroke-width="1"/><text x="72" y="192" font-size="7.5" font-family="Liberation Sans" font-weight="bold" fill="#111">ST</text><rect x="32.5" y="208.5" width="10" height="10" fill="#ececec" stroke="#a8a8a8" stroke-width="1"/><rect x="33" y="216" width="9" height="2" fill="#d8d8d8"/><path d="M34.5 213.5h6" stroke="#2840b0" stroke-width="1.2"/><path d="M52 209.5h4l1 1.5h8.5v9.5h-13.5z" fill="#fff2b0" stroke="#c89010" stroke-width="1.2"/><rect x="52.5" y="217" width="13" height="3.5" fill="#f8d040"/><rect x="54" y="211.5" width="10" height="6" fill="#2a8a2a"/><rect x="56" y="212" width="7" height="4" fill="#50b040"/><rect x="54" y="212" width="2" height="5" fill="#e8f4d0"/><rect x="64" y="211" width="3" height="2" fill="#2a8a2a"/><path d="M70 231h8l2 2v11h-10z" fill="#c8e4fa" stroke="#8aa0c0" stroke-width="1"/><rect x="73.5" y="236.5" width="11" height="8" fill="#fff" stroke="#4040e0" stroke-width="1.2"/><path d="M74 239h10M74 242h10M77 237v7" stroke="#4040e0" stroke-width="1"/><path d="M71.5 256.5h8l3 3v10h-11z" fill="#ececec" stroke="#9a9a9a" stroke-width="1"/><text x="72" y="267" font-size="7.5" font-family="Liberation Sans" font-weight="bold" fill="#111">ST</text><rect x="14.5" y="283.5" width="10" height="10" fill="#ececec" stroke="#a8a8a8" stroke-width="1"/><rect x="15" y="291" width="9" height="2" fill="#d8d8d8"/><path d="M16.5 288.5h6" stroke="#2840b0" stroke-width="1.2"/><path d="M34 284.5h4l1 1.5h8.5v9.5h-13.5z" fill="#fff2b0" stroke="#c89010" stroke-width="1.2"/><rect x="34.5" y="292" width="13" height="3.5" fill="#f8d040"/><rect x="36" y="286.5" width="10" height="6" fill="#2a8a2a"/><rect x="38" y="287" width="7" height="4" fill="#50b040"/><rect x="36" y="287" width="2" height="5" fill="#e8f4d0"/><rect x="46" y="286" width="3" height="2" fill="#2a8a2a"/><rect x="32.5" y="308.5" width="10" height="10" fill="#ececec" stroke="#a8a8a8" stroke-width="1"/><rect x="33" y="316" width="9" height="2" fill="#d8d8d8"/><path d="M34.5 313.5h6" stroke="#2840b0" stroke-width="1.2"/><path d="M52 309.5h4l1 1.5h8.5v9.5h-13.5z" fill="#fff2b0" stroke="#c89010" stroke-width="1.2"/><rect x="52.5" y="317" width="13" height="3.5" fill="#f8d040"/><rect x="54" y="311.5" width="10" height="6" fill="#2a8a2a"/><rect x="56" y="312" width="7" height="4" fill="#50b040"/><rect x="54" y="312" width="2" height="5" fill="#e8f4d0"/><rect x="64" y="311" width="3" height="2" fill="#2a8a2a"/><path d="M70 331h8l2 2v11h-10z" fill="#c8e4fa" stroke="#8aa0c0" stroke-width="1"/><rect x="73.5" y="336.5" width="11" height="8" fill="#fff" stroke="#4040e0" stroke-width="1.2"/><path d="M74 339h10M74 342h10M77 337v7" stroke="#4040e0" stroke-width="1"/><path d="M71.5 356.5h8l3 3v10h-11z" fill="#ececec" stroke="#9a9a9a" stroke-width="1"/><text x="72" y="367" font-size="7.5" font-family="Liberation Sans" font-weight="bold" fill="#111">ST</text><rect x="32.5" y="383.5" width="10" height="10" fill="#ececec" stroke="#a8a8a8" stroke-width="1"/><rect x="33" y="391" width="9" height="2" fill="#d8d8d8"/><path d="M34.5 388.5h6" stroke="#2840b0" stroke-width="1.2"/><path d="M37.5 385.5v6" stroke="#2840b0" stroke-width="1.2"/><path d="M52 384.5h4l1 1.5h8.5v9.5h-13.5z" fill="#fff2b0" stroke="#c89010" stroke-width="1.2"/><rect x="52.5" y="392" width="13" height="3.5" fill="#f8d040"/><rect x="54" y="386.5" width="10" height="6" fill="#2a8a2a"/><rect x="56" y="387" width="7" height="4" fill="#50b040"/><rect x="54" y="387" width="2" height="5" fill="#e8f4d0"/><rect x="64" y="386" width="3" height="2" fill="#2a8a2a"/><rect x="32.5" y="408.5" width="10" height="10" fill="#ececec" stroke="#a8a8a8" stroke-width="1"/><rect x="33" y="416" width="9" height="2" fill="#d8d8d8"/><path d="M34.5 413.5h6" stroke="#2840b0" stroke-width="1.2"/><path d="M37.5 410.5v6" stroke="#2840b0" stroke-width="1.2"/><path d="M52 409.5h4l1 1.5h8.5v9.5h-13.5z" fill="#efe6c0" stroke="#b09a60" stroke-width="1"/><rect x="54" y="412" width="9" height="5" fill="#9cc090"/><rect x="54" y="412" width="2" height="5" fill="#e0f0d8"/><rect x="60" y="416" width="7" height="6" fill="#222"/><path d="M61.5 416v-1.5a2 2 0 0 1 4 0v1.5" fill="none" stroke="#333" stroke-width="1.2"/><rect x="63" y="418" width="1.5" height="2" fill="#aaa"/><rect x="14.5" y="433.5" width="10" height="10" fill="#ececec" stroke="#a8a8a8" stroke-width="1"/><rect x="15" y="441" width="9" height="2" fill="#d8d8d8"/><path d="M16.5 438.5h6" stroke="#2840b0" stroke-width="1.2"/><path d="M19.5 435.5v6" stroke="#2840b0" stroke-width="1.2"/><path d="M34 434.5h4l1 1.5h8.5v9.5h-13.5z" fill="#fff2b0" stroke="#c89010" stroke-width="1.2"/><rect x="34.5" y="442" width="13" height="3.5" fill="#f8d040"/><rect x="36" y="436.5" width="10" height="6" fill="#2a8a2a"/><rect x="38" y="437" width="7" height="4" fill="#50b040"/><rect x="36" y="437" width="2" height="5" fill="#e8f4d0"/><rect x="46" y="436" width="3" height="2" fill="#2a8a2a"/><rect x="14.5" y="458.5" width="10" height="10" fill="#ececec" stroke="#a8a8a8" stroke-width="1"/><rect x="15" y="466" width="9" height="2" fill="#d8d8d8"/><path d="M16.5 463.5h6" stroke="#2840b0" stroke-width="1.2"/><path d="M19.5 460.5v6" stroke="#2840b0" stroke-width="1.2"/><path d="M34 459.5h4l1 1.5h8.5v9.5h-13.5z" fill="#fff2b0" stroke="#c89010" stroke-width="1.2"/><rect x="34.5" y="467" width="13" height="3.5" fill="#f8d040"/><rect x="36" y="461.5" width="10" height="6" fill="#2a8a2a"/><rect x="38" y="462" width="7" height="4" fill="#50b040"/><rect x="36" y="462" width="2" height="5" fill="#e8f4d0"/><rect x="46" y="461" width="3" height="2" fill="#2a8a2a"/><rect x="-3.5" y="483.5" width="10" height="10" fill="#ececec" stroke="#a8a8a8" stroke-width="1"/><rect x="-3" y="491" width="9" height="2" fill="#d8d8d8"/><path d="M-1.5 488.5h6" stroke="#2840b0" stroke-width="1.2"/><path d="M1.5 485.5v6" stroke="#2840b0" stroke-width="1.2"/><path d="M15.5 484.5h15v10h-15z" fill="#fff0b0" stroke="#c89010" stroke-width="1.2"/><circle cx="22" cy="484" r="4" fill="#30a040"/><circle cx="21" cy="483" r="2" fill="#60a0f0"/><rect x="20.5" y="486.5" width="10" height="8" fill="#fff" stroke="#4040e0" stroke-width="1.2"/><path d="M21 489h9M21 492h9M24 487v7" stroke="#4040e0" stroke-width="1"/><rect x="-3.5" y="508.5" width="10" height="10" fill="#ececec" stroke="#a8a8a8" stroke-width="1"/><rect x="-3" y="516" width="9" height="2" fill="#d8d8d8"/><path d="M-1.5 513.5h6" stroke="#2840b0" stroke-width="1.2"/><path d="M1.5 510.5v6" stroke="#2840b0" stroke-width="1.2"/><path d="M15.5 508.5h15v11h-15z" fill="#f8e080" stroke="#c89010" stroke-width="1.2"/><circle cx="20" cy="509" r="3" fill="#f080a0"/><circle cx="26" cy="509" r="3" fill="#80d060"/><rect x="16" y="514" width="14" height="5" fill="#f0d060"/><rect x="-3.5" y="533.5" width="10" height="10" fill="#ececec" stroke="#a8a8a8" stroke-width="1"/><rect x="-3" y="541" width="9" height="2" fill="#d8d8d8"/><path d="M-1.5 538.5h6" stroke="#2840b0" stroke-width="1.2"/><path d="M1.5 535.5v6" stroke="#2840b0" stroke-width="1.2"/><path d="M15.5 534.5h15v10h-15z" fill="#fff0b0" stroke="#c89010" stroke-width="1.2"/><rect x="18" y="531" width="7" height="11" fill="#333"/><rect x="19" y="533" width="5" height="1.5" fill="#aaa"/><path d="M22 544l8-9" stroke="#1a50d0" stroke-width="2"/><circle cx="29" cy="534" r="2" fill="none" stroke="#1a50d0" stroke-width="1.5"/></svg>
<div class="tree" style="left:18px;top:5px;color:#e02020"><span style="font-size:15px;position:relative;top:-2px">工</span><span style="font-size:15px;position:relative;top:-2px">程</span></div>
<div class="tree" style="left:36px;top:30px;color:#fff"><span style="font-size:15px;position:relative;top:-2px">模</span><span style="font-size:15px;position:relative;top:-2px">块</span><span style="font-size:15px;position:relative;top:-2px">配</span><span style="font-size:15px;position:relative;top:-2px">置</span><span style="font-size:15px;position:relative;top:-2px">图</span></div>
<div class="tree" style="left:36px;top:55px;color:#fff"><span style="font-size:15px;position:relative;top:-2px">程</span><span style="font-size:15px;position:relative;top:-2px">序</span></div>
<div class="tree" style="left:36px;top:80px;color:#fff">FB/FUN</div>
<div class="tree cy" style="left:54px;top:105px;">Door_Light</div>
<div class="tree cy" style="left:72px;top:130px;">FBDoor</div>
<div class="tree cy" style="left:90px;top:155px;"><span style="font-size:15px;position:relative;top:-2px">局</span><span style="font-size:15px;position:relative;top:-2px">部</span><span style="font-size:15px;position:relative;top:-2px">标</span><span style="font-size:15px;position:relative;top:-2px">签</span></div>
<div class="tree cy" style="left:90px;top:180px;"><span style="font-size:15px;position:relative;top:-2px">程</span><span style="font-size:15px;position:relative;top:-2px">序</span><span style="font-size:15px;position:relative;top:-2px">本</span><span style="font-size:15px;position:relative;top:-2px">体</span></div>
<div class="tree" style="left:72px;top:205px;color:#000">FBLight</div>
<div class="tree cy" style="left:90px;top:230px;"><span style="font-size:15px;position:relative;top:-2px">局</span><span style="font-size:15px;position:relative;top:-2px">部</span><span style="font-size:15px;position:relative;top:-2px">标</span><span style="font-size:15px;position:relative;top:-2px">签</span></div>
<div class="tree cy" style="left:90px;top:255px;"><span style="font-size:15px;position:relative;top:-2px">程</span><span style="font-size:15px;position:relative;top:-2px">序</span><span style="font-size:15px;position:relative;top:-2px">本</span><span style="font-size:15px;position:relative;top:-2px">体</span></div>
<div class="tree cy" style="left:54px;top:280px;">Timer</div>
<div class="tree cy" style="left:72px;top:305px;">FBwCT</div>
<div class="tree cy" style="left:90px;top:330px;"><span style="font-size:15px;position:relative;top:-2px">局</span><span style="font-size:15px;position:relative;top:-2px">部</span><span style="font-size:15px;position:relative;top:-2px">标</span><span style="font-size:15px;position:relative;top:-2px">签</span></div>
<div class="tree cy" style="left:90px;top:355px;"><span style="font-size:15px;position:relative;top:-2px">程</span><span style="font-size:15px;position:relative;top:-2px">序</span><span style="font-size:15px;position:relative;top:-2px">本</span><span style="font-size:15px;position:relative;top:-2px">体</span></div>
<div class="tree cy" style="left:72px;top:380px;">FBwMoudleTimer</div>
<div class="tree cy" style="left:72px;top:405px;">S_STW</div>
<div class="tree cy" style="left:54px;top:430px;">FBAXIS</div>
<div class="tree cy" style="left:54px;top:455px;">Cylinder_Cavuum</div>
<div class="tree" style="left:36px;top:480px;color:#fff"><span style="font-size:15px;position:relative;top:-2px">标</span><span style="font-size:15px;position:relative;top:-2px">签</span></div>
<div class="tree" style="left:36px;top:505px;color:#fff"><span style="font-size:15px;position:relative;top:-2px">软</span><span style="font-size:15px;position:relative;top:-2px">元</span><span style="font-size:15px;position:relative;top:-2px">件</span></div>
<div class="tree" style="left:36px;top:530px;color:#fff"><span style="font-size:15px;position:relative;top:-2px">参</span><span style="font-size:15px;position:relative;top:-2px">数</span></div>
</div>
<div class="a" style="left:0px;top:882px;width:215px;height:25px;background:#2d3c5a;background-image:radial-gradient(#3a4a68 0.8px,transparent 0.9px);background-size:3px 3px"></div>
<svg style="left:0;top:885px" width="18" height="20" viewBox="0 0 18 20"><rect x="0" y="6" width="10" height="12" fill="none" stroke="#30b030" stroke-width="1.5"/><rect x="3.5" y="1.5" width="10" height="7" fill="#d0e4f4" stroke="#333" stroke-width="1"/><rect x="2" y="9" width="9" height="3" fill="#666"/><rect x="2" y="12" width="8" height="4" fill="#fff"/><rect x="10" y="4" width="7" height="15" fill="#2a2a2a"/><rect x="11" y="7" width="5" height="1" fill="#888"/><rect x="11" y="11" width="5" height="1" fill="#888"/><rect x="11" y="15" width="5" height="1" fill="#888"/></svg>
<div class="a t" style="left:20px;top:886px;font-size:15px;line-height:18px;color:#fff">连接目标</div>
<div class="a" style="left:87px;top:882px;width:65px;height:25px;background:#fff;border-radius:0 0 3px 3px"></div>
<svg style="left:94px;top:883px" width="20" height="20" viewBox="0 0 20 20"><path d="M4 9v8h6M4 13h6" fill="none" stroke="#ddd" stroke-width="1"/><rect x="0.5" y="1.5" width="7" height="5" fill="#ffc820" stroke="#8a5a00" stroke-width="1"/><rect x="11.5" y="9.5" width="6" height="5" fill="#ffc820" stroke="#8a5a00" stroke-width="1"/><rect x="11.5" y="15.5" width="6" height="4" fill="#ffc820" stroke="#8a5a00" stroke-width="1"/></svg>
<div class="a t" style="left:116px;top:886px;font-size:15px;line-height:18px;color:#000">导航</div>
<div class="a" style="left:0px;top:913px;width:215px;height:29px;background:linear-gradient(#4c5d80,#3e5175);border-radius:0 3px 0 0"></div>
<div class="a t" style="left:-3px;top:920px;font-size:15px;line-height:18px;color:#fff">快速搜索</div>
<svg style="left:176px;top:921px" width="10" height="14" viewBox="0 0 10 14"><path d="M2 1h6M3 1v7M7 1v7M1 8h8M5 8v6" fill="none" stroke="#e8ecf4" stroke-width="1.4"/></svg>
<svg style="left:198px;top:923px" width="10" height="10" viewBox="0 0 10 10"><path d="M0.5 0.5L9.5 9.5M9.5 0.5L0.5 9.5" fill="none" stroke="#e8ecf4" stroke-width="1.4"/></svg>
<div class="a" style="left:0px;top:942px;width:215px;height:33px;background:#bdc8d9"></div>
<div class="a t" style="left:3px;top:950px;font-size:14.5px;line-height:18px;color:#000">搜索对象: 全部(A)</div>
<div class="a" style="left:126px;top:957px;width:0;height:0;border-left:4px solid transparent;border-right:4px solid transparent;border-top:4px solid #1c2538"></div>
<div class="a" style="left:0px;top:975px;width:215px;height:2px;background:#8a8f98"></div>
<div class="a" style="left:0px;top:977px;width:215px;height:13px;background:#f0f0f0"></div>
<div class="a" style="left:215px;top:151px;width:1001px;height:28px;background:#2d3c5a;background-image:radial-gradient(#34446a 0.8px,transparent 0.9px);background-size:3px 3px"></div>
<svg style="left:228px;top:156px" width="20" height="20" viewBox="0 0 20 20"><rect x="0" y="0" width="20" height="20" fill="#108a88"/><path d="M1 2c1-2 16-2 18 0v10l-2 2H2l-1-2z" fill="#fff"/><path d="M2 4.5h3M2 8h16M8 1v12M12 1v12" stroke="#777" stroke-width="1.2"/><path d="M2 4.5h3" stroke="#111" stroke-width="1.2"/><rect x="2" y="12" width="15" height="8" fill="#111"/><rect x="4" y="16" width="3" height="4" fill="#f00"/><rect x="9" y="13" width="1" height="7" fill="#eee"/><rect x="12" y="13" width="1" height="7" fill="#aaa"/><rect x="15" y="13" width="1" height="7" fill="#aaa"/></svg>
<div class="a t" style="left:251px;top:158px;font-size:15.2px;line-height:18px;color:#fff">1 [软元件/缓冲存储器批量监视]</div>
<svg style="left:493px;top:156px" width="17" height="20" viewBox="0 0 17 20"><path d="M1.5 1.5h10l4 4v14h-14z" fill="#111"/><path d="M0.5 0.5h11l3 3v15h-14z" fill="#fff"/><path d="M11.5 0.5v3h3" fill="#ddd" stroke="#333" stroke-width="0.8"/><rect x="2" y="9" width="11" height="2" fill="#f00"/><rect x="4" y="6" width="3" height="9" fill="#f00"/><rect x="9" y="6" width="3" height="9" fill="#f00"/><rect x="7" y="6" width="2" height="9" fill="#fff"/></svg>
<div class="a t" style="left:514px;top:158px;font-size:15px;line-height:18px;color:#fff">MC:N0 IO核对 [PRG] [LD] (只...</div>
<svg style="left:766px;top:155px" width="20" height="20" viewBox="0 0 20 20"><rect x="1" y="1" width="10" height="14" fill="#cfe0f8" stroke="#5a6aa0" stroke-width="0.8"/><rect x="7" y="8" width="12" height="11" fill="#fff" stroke="#2a3a90" stroke-width="1"/><path d="M8 12h10M8 15h10M12 8v11" stroke="#2a3a90" stroke-width="1"/></svg>
<div class="a t" style="left:789px;top:158px;font-size:15px;line-height:18px;color:#fff">FBDoor [FB] [函数/FB标签设置]</div>
<svg style="left:1037px;top:156px" width="18" height="18" viewBox="0 0 18 18"><rect x="0.5" y="0.5" width="17" height="17" fill="#fff" stroke="#777" stroke-width="1"/><text x="2" y="13.5" font-size="9.5" font-family="Liberation Sans" font-weight="bold" fill="#222">ST</text></svg>
<div class="a t" style="left:1059px;top:158px;font-size:15.5px;line-height:18px;color:#fff">FBDoor [FB] [ST] *</div>
<svg style="left:474px;top:161px" width="9" height="9" viewBox="0 0 10 10"><path d="M0.5 0.5L9.5 9.5M9.5 0.5L0.5 9.5" fill="none" stroke="#36466a" stroke-width="1.4"/></svg>
<svg style="left:743px;top:161px" width="9" height="9" viewBox="0 0 10 10"><path d="M0.5 0.5L9.5 9.5M9.5 0.5L0.5 9.5" fill="none" stroke="#36466a" stroke-width="1.4"/></svg>
<svg style="left:1010px;top:161px" width="9" height="9" viewBox="0 0 10 10"><path d="M0.5 0.5L9.5 9.5M9.5 0.5L0.5 9.5" fill="none" stroke="#36466a" stroke-width="1.4"/></svg>
<svg style="left:1192px;top:161px" width="9" height="9" viewBox="0 0 10 10"><path d="M0.5 0.5L9.5 9.5M9.5 0.5L0.5 9.5" fill="none" stroke="#36466a" stroke-width="1.4"/></svg>
<div class="a" style="left:1211px;top:151px;width:5px;height:28px;background:#fdf3cf;border-radius:3px 0 0 0"></div>
<div class="a" style="left:221px;top:179px;width:995px;height:810px;background:#fde9a8"></div>
<div class="a" style="left:223px;top:183px;width:993px;height:800px;background:#828282"></div>
<div class="a" style="left:225px;top:186px;width:991px;height:775px;background:#fff"></div>
<div class="a" style="left:225px;top:186px;width:27px;height:775px;background:#f0f0f0"></div>
<div class="a" style="left:225px;top:961px;width:991px;height:21px;background:#f0f0f0"></div>
<svg style="left:230px;top:965px" width="10" height="12" viewBox="0 0 10 12"><path d="M7 1L2 6l5 5" fill="none" stroke="#a8a8a8" stroke-width="1.5"/></svg>
<div class="a" style="left:278px;top:186px;width:1px;height:775px;background-image:linear-gradient(#1a8a1a 50%,transparent 50%);background-size:1px 2px"></div>
<div class="a" style="left:225px;top:186px;width:991px;height:775px;overflow:hidden">
<div class="code" style="left:0;width:51px;text-align:right;top:2px;color:#008000">1</div>
<div class="code" style="left:70px;top:2px"><span class="c">//_dwActualNumberCT:=_wNumberCT;</span></div>
<div class="code" style="left:0;width:51px;text-align:right;top:24px;color:#008000">2</div>
<div class="code" style="left:70px;top:24px"><span class="c">//</span><span class="c cj">次数限制</span></div>
<div class="code" style="left:0;width:51px;text-align:right;top:46px;color:#008000">3</div>
<div class="code" style="left:69px;top:46px"><span class="k">IF</span><span class="n"> </span><span class="v">_wNumberCT</span><span class="n">&gt;= 20 </span><span class="k">THEN</span></div>
<div class="code" style="left:0;width:51px;text-align:right;top:68px;color:#008000">4</div>
<div class="code" style="left:90px;top:68px"><span class="v">_wNumberCT</span><span class="n">:=20;</span></div>
<div class="code" style="left:0;width:51px;text-align:right;top:90px;color:#008000">5</div>
<div class="code" style="left:70px;top:90px"><span class="k">END_IF</span><span class="n">;</span></div>
<div class="code" style="left:0;width:51px;text-align:right;top:112px;color:#008000">6</div>
<div class="code" style="left:70px;top:112px"><span class="c">//</span><span class="c cj">判断</span><span class="c">CT</span><span class="c cj">稳定计数</span></div>
<div class="code" style="left:0;width:51px;text-align:right;top:134px;color:#008000">7</div>
<div class="code" style="left:69px;top:134px"><span class="k">IF</span><span class="n"> LDP (</span><span class="k">TRUE</span><span class="n">,</span><span class="v">_bTriggerCT</span><span class="n">) AND </span><span class="v">_wCountingCT</span><span class="n">&lt;2 </span><span class="k">THEN</span></div>
<div class="code" style="left:0;width:51px;text-align:right;top:156px;color:#008000">8</div>
<div class="code" style="left:90px;top:156px"><span class="v">_wCountingCT</span><span class="n">:=</span><span class="v">_wCountingCT</span><span class="n">+1;</span></div>
<div class="code" style="left:0;width:51px;text-align:right;top:178px;color:#008000">9</div>
<div class="code" style="left:70px;top:178px"><span class="k">END_IF</span><span class="n">;</span></div>
<div class="code" style="left:0;width:51px;text-align:right;top:200px;color:#008000">10</div>
<div class="code" style="left:70px;top:200px"><span class="c">//CT</span><span class="c cj">稳定计数清零</span></div>
<div class="code" style="left:0;width:51px;text-align:right;top:222px;color:#008000">11</div>
<div class="code" style="left:69px;top:222px"><span class="k">IF</span><span class="n"> LDF (</span><span class="k">TRUE</span><span class="n">,</span><span class="v">jPlcStatus.bAutoing</span><span class="n">) OR LDP(</span><span class="k">TRUE</span><span class="n">,</span><span class="v">_bResetCT</span><span class="n">) </span><span class="k">THEN</span></div>
<div class="code" style="left:0;width:51px;text-align:right;top:244px;color:#008000">12</div>
<div class="code" style="left:90px;top:244px"><span class="v">_wCountingCT</span><span class="n">:=0;</span></div>
<div class="code" style="left:0;width:51px;text-align:right;top:266px;color:#008000">13</div>
<div class="code" style="left:69px;top:266px"><span class="k">END_IF</span><span class="n">;</span></div>
<div class="code" style="left:0;width:51px;text-align:right;top:288px;color:#008000">14</div>
<div class="code" style="left:70px;top:288px"><span class="c">//CT</span><span class="c cj">统计时间</span></div>
<div class="code" style="left:0;width:51px;text-align:right;top:310px;color:#008000">15</div>
<div class="code" style="left:69px;top:310px"><span class="k">IF</span><span class="n"> </span><span class="v">_wCountingCT</span><span class="n">&gt;=2 </span><span class="k">THEN</span></div>
<div class="code" style="left:0;width:51px;text-align:right;top:332px;color:#008000">16</div>
<div class="code" style="left:89px;top:332px"><span class="k">IF</span><span class="n"> LDPI( </span><span class="k">TRUE</span><span class="n"> ,</span><span class="v">_bTriggerCT</span><span class="n"> ) </span><span class="k">THEN</span></div>
<div class="code" style="left:0;width:51px;text-align:right;top:354px;color:#008000">17</div>
<div class="code" style="left:90px;top:354px"></div>
<div class="code" style="left:0;width:51px;text-align:right;top:376px;color:#008000">18</div>
<div class="code" style="left:109px;top:376px"><span class="k">IF</span><span class="n"> LDP( </span><span class="k">TRUE</span><span class="n"> , </span><span class="v">jPlcStatus.b0_1sPius</span><span class="n"> ) </span><span class="k">THEN</span></div>
<div class="code" style="left:0;width:51px;text-align:right;top:398px;color:#008000">19</div>
<div class="code" style="left:130px;top:398px"><span class="v">_BuffermemoryCT</span><span class="n">:=</span><span class="v">_BuffermemoryCT</span><span class="n">+1;</span></div>
<div class="code" style="left:0;width:51px;text-align:right;top:420px;color:#008000">20</div>
<div class="code" style="left:110px;top:420px"><span class="k">END_IF</span><span class="n">;</span></div>
<div class="code" style="left:0;width:51px;text-align:right;top:442px;color:#008000">21</div>
<div class="code" style="left:90px;top:442px"><span class="k">END_IF</span><span class="n">;</span></div>
<div class="code" style="left:0;width:51px;text-align:right;top:464px;color:#008000">22</div>
<div class="code" style="left:70px;top:464px"><span class="k">END_IF</span><span class="n">;</span></div>
<div class="code" style="left:0;width:51px;text-align:right;top:486px;color:#008000">23</div>
<div class="code" style="left:69px;top:486px"><span class="c">//CT</span><span class="c cj">统计时间缓存</span></div>
<div class="code" style="left:0;width:51px;text-align:right;top:508px;color:#008000">24</div>
<div class="code" style="left:70px;top:508px"><span class="n">INT2DINT( </span><span class="k">TRUE</span><span class="n">, </span><span class="v">_wNumberCT</span><span class="n"> , </span><span class="v">_dwNumberCT</span><span class="n"> );</span></div>
<div class="code" style="left:0;width:51px;text-align:right;top:530px;color:#008000">25</div>
<div class="code" style="left:69px;top:530px"><span class="k">IF</span><span class="n"> </span><span class="v">_wCountingCT</span><span class="n">&gt;=2 AND LDP( </span><span class="k">TRUE</span><span class="n"> ,</span><span class="v">_bTriggerCT</span><span class="n"> ) </span><span class="k">THEN</span></div>
<div class="code" style="left:0;width:51px;text-align:right;top:552px;color:#008000">26</div>
<div class="code" style="left:86px;top:552px"><span class="v">_wRealTimerCT</span><span class="n">[0]:=</span><span class="v">_BuffermemoryCT</span><span class="n">;</span></div>
<div class="code" style="left:0;width:51px;text-align:right;top:574px;color:#008000">27</div>
<div class="code" style="left:86px;top:574px"><span class="n">DSFL( </span><span class="k">TRUE</span><span class="n"> , </span><span class="v">_wNumberCT</span><span class="n">+1 ,</span><span class="v">_wRealTimerCT</span><span class="n"> [0] );</span></div>
<div class="code" style="left:0;width:51px;text-align:right;top:596px;color:#008000">28</div>
<div class="code" style="left:86px;top:596px"><span class="v">_BuffermemoryCT</span><span class="n">:=0;</span></div>
<div class="code" style="left:0;width:51px;text-align:right;top:618px;color:#008000">29</div>
<div class="code" style="left:89px;top:618px"><span class="k">IF</span><span class="n"> </span><span class="v">_dwActualNumberCT</span><span class="n">&lt;</span><span class="v">_dwNumberCT</span><span class="n"> AND </span><span class="v">_wCountingCT</span><span class="n">&gt;2 </span><span class="k">THEN</span></div>
<div class="code" style="left:0;width:51px;text-align:right;top:640px;color:#008000">30</div>
<div class="code" style="left:105px;top:640px"><span class="v">_dwActualNumberCT</span><span class="n">:=</span><span class="v">_dwActualNumberCT</span><span class="n">+1;</span></div>
<div class="code" style="left:0;width:51px;text-align:right;top:662px;color:#008000">31</div>
<div class="code" style="left:105px;top:662px"><span class="k">ELSIF</span><span class="n"> </span><span class="v">_dwActualNumberCT</span><span class="n">&gt;=</span><span class="v">_dwNumberCT</span><span class="n"> </span><span class="k">THEN</span></div>
<div class="code" style="left:0;width:51px;text-align:right;top:684px;color:#008000">32</div>
<div class="code" style="left:130px;top:684px"><span class="v">_dwActualNumberCT</span><span class="n">:=</span><span class="v">_dwNumberCT</span><span class="n">;</span></div>
<div class="code" style="left:0;width:51px;text-align:right;top:706px;color:#008000">33</div>
<div class="code" style="left:90px;top:706px"><span class="k">END_IF</span><span class="n">;</span></div>
<div class="code" style="left:0;width:51px;text-align:right;top:728px;color:#008000">34</div>
<div class="code" style="left:70px;top:728px"><span class="k">END_IF</span><span class="n">;</span></div>
<div class="code" style="left:0;width:51px;text-align:right;top:750px;color:#008000">35</div>
<div class="code" style="left:70px;top:750px"><span class="c">//CT</span><span class="c cj">统计时间存储显示</span></div>
<div class="a" style="left:63px;top:62px;width:1px;height:46px;background:#808080"></div>
<div class="a" style="left:63px;top:150px;width:1px;height:46px;background:#808080"></div>
<div class="a" style="left:63px;top:238px;width:1px;height:46px;background:#808080"></div>
<div class="a" style="left:63px;top:326px;width:1px;height:156px;background:#808080"></div>
<div class="a" style="left:63px;top:546px;width:1px;height:200px;background:#808080"></div>
<svg style="left:58px;top:51px" width="11" height="11" viewBox="0 0 11 11"><rect x="0.5" y="0.5" width="10" height="10" fill="#fff" stroke="#808080" stroke-width="1"/><path d="M2.5 5.5h6" stroke="#555" stroke-width="1"/></svg>
<svg style="left:58px;top:139px" width="11" height="11" viewBox="0 0 11 11"><rect x="0.5" y="0.5" width="10" height="10" fill="#fff" stroke="#808080" stroke-width="1"/><path d="M2.5 5.5h6" stroke="#555" stroke-width="1"/></svg>
<svg style="left:58px;top:227px" width="11" height="11" viewBox="0 0 11 11"><rect x="0.5" y="0.5" width="10" height="10" fill="#fff" stroke="#808080" stroke-width="1"/><path d="M2.5 5.5h6" stroke="#555" stroke-width="1"/></svg>
<svg style="left:58px;top:315px" width="11" height="11" viewBox="0 0 11 11"><rect x="0.5" y="0.5" width="10" height="10" fill="#fff" stroke="#808080" stroke-width="1"/><path d="M2.5 5.5h6" stroke="#555" stroke-width="1"/></svg>
<svg style="left:58px;top:337px" width="11" height="11" viewBox="0 0 11 11"><rect x="0.5" y="0.5" width="10" height="10" fill="#fff" stroke="#808080" stroke-width="1"/><path d="M2.5 5.5h6" stroke="#555" stroke-width="1"/></svg>
<svg style="left:58px;top:381px" width="11" height="11" viewBox="0 0 11 11"><rect x="0.5" y="0.5" width="10" height="10" fill="#fff" stroke="#808080" stroke-width="1"/><path d="M2.5 5.5h6" stroke="#555" stroke-width="1"/></svg>
<svg style="left:58px;top:535px" width="11" height="11" viewBox="0 0 11 11"><rect x="0.5" y="0.5" width="10" height="10" fill="#fff" stroke="#808080" stroke-width="1"/><path d="M2.5 5.5h6" stroke="#555" stroke-width="1"/></svg>
<svg style="left:58px;top:623px" width="11" height="11" viewBox="0 0 11 11"><rect x="0.5" y="0.5" width="10" height="10" fill="#fff" stroke="#808080" stroke-width="1"/><path d="M2.5 5.5h6" stroke="#555" stroke-width="1"/></svg>
<div class="a" style="left:63px;top:108px;width:6px;height:1px;background:#808080"></div>
<div class="a" style="left:63px;top:196px;width:6px;height:1px;background:#808080"></div>
<div class="a" style="left:63px;top:284px;width:6px;height:1px;background:#808080"></div>
<div class="a" style="left:63px;top:438px;width:6px;height:1px;background:#808080"></div>
<div class="a" style="left:63px;top:460px;width:6px;height:1px;background:#808080"></div>
<div class="a" style="left:63px;top:482px;width:6px;height:1px;background:#808080"></div>
<div class="a" style="left:63px;top:724px;width:6px;height:1px;background:#808080"></div>
<div class="a" style="left:63px;top:746px;width:6px;height:1px;background:#808080"></div>
<div class="a" style="left:90px;top:353px;width:1px;height:88px;background:#e4e4e4"></div>
<div class="a" style="left:110px;top:397px;width:1px;height:22px;background:#e4e4e4"></div>
<div class="a" style="left:90px;top:639px;width:1px;height:66px;background:#e4e4e4"></div>
<div class="a" style="left:110px;top:683px;width:1px;height:22px;background:#e4e4e4"></div>
</div>
<div class="a" style="left:669px;top:242px;width:560px;height:509px;background:#f0f0f0;border:1px solid #707070;box-shadow:0 0 12px 3px rgba(0,0,0,0.24)"></div>
<div class="a" style="left:670px;top:243px;width:546px;height:37px;background:#fff"></div>
<div class="a t" style="left:679px;top:252px;font-size:15px;line-height:18px;color:#000">块口令设置</div>
<svg style="left:1203px;top:255px" width="12" height="12" viewBox="0 0 10 10"><path d="M0.5 0.5L9.5 9.5M9.5 0.5L0.5 9.5" fill="none" stroke="#111" stroke-width="1.0"/></svg>
<div class="a t" style="left:681px;top:311px;font-size:15.5px;line-height:18px;color:#000">登录、更改、认证或删除程序部件的口令。</div>
<div class="a" style="left:672px;top:344px;width:544px;height:1px;background:#a0a0a0"></div>
<div class="a" style="left:672px;top:345px;width:544px;height:1px;background:#fff"></div>
<div class="a t" style="left:681px;top:361px;font-size:15.5px;line-height:18px;color:#000">程序部件一览:</div>
<div class="a" style="left:682px;top:390px;width:534px;height:270px;background:#fff;border-top:1px solid #828790;border-left:1px solid #828790"></div>
<div class="a" style="left:683px;top:391px;width:513px;height:28px;background:linear-gradient(#fdfeff,#cfe2fc)"></div>
<div class="a" style="left:683px;top:418px;width:513px;height:2px;background:#1a1a2a"></div>
<div class="a" style="left:960px;top:396px;width:1px;height:20px;background:#9cc0f0"></div>
<div class="a" style="left:1118px;top:396px;width:1px;height:20px;background:#9cc0f0"></div>
<div class="a t" style="left:686px;top:395px;font-size:15px;line-height:18px">数据名</div>
<svg style="left:748px;top:401px" width="9" height="8" viewBox="0 0 9 8"><path d="M4.5 0.5L8.5 7.5H0.5z" fill="none" stroke="#9a9a9a" stroke-width="1"/></svg>
<div class="a t" style="left:964px;top:395px;font-size:15px;line-height:18px">登录状态</div>
<div class="a" style="left:683px;top:420px;width:277px;height:23px;background:#f4f4f4"></div>
<div class="a" style="left:961px;top:420px;width:157px;height:23px;background:#fff"></div>
<div class="a" style="left:683px;top:443px;width:435px;height:1px;background:#7ea6dc"></div>
<div class="a" style="left:960px;top:419px;width:1px;height:25px;background:#7ea6dc"></div>
<div class="a" style="left:1118px;top:419px;width:1px;height:25px;background:#7ea6dc"></div>
<div class="a" style="left:682px;top:419px;width:1px;height:25px;background:#7ea6dc"></div>
<svg style="left:684px;top:425px" width="17" height="17" viewBox="0 0 17 17"><path d="M1 2.5h4l1 1.5h8.5v9.5h-13.5z" fill="#efe6c0" stroke="#b09a60" stroke-width="1"/><rect x="3" y="5" width="9" height="5" fill="#9cc090"/><rect x="3" y="5" width="2" height="5" fill="#e0f0d8"/><rect x="9" y="9" width="7" height="6" fill="#222"/><path d="M10.5 9v-1.5a2 2 0 0 1 4 0v1.5" fill="none" stroke="#333" stroke-width="1.2"/><rect x="12" y="11" width="1.5" height="2" fill="#aaa"/></svg>
<div class="a t" style="left:703px;top:421px;font-size:12.6px;line-height:18px;color:#000">FBCylinder</div>
<svg style="left:964px;top:427px" width="11" height="12" viewBox="0 0 12 13"><path d="M3 6V4a3 3 0 0 1 6 0v2" fill="none" stroke="#b08a20" stroke-width="1.5"/><rect x="1" y="6" width="10" height="7" fill="#f0b828" stroke="#a07810" stroke-width="0.8"/><rect x="2" y="9" width="8" height="1" fill="#ffe890"/></svg>
<div class="a t" style="left:982px;top:420px;font-size:15px;line-height:18px;color:#000">已登录</div>
<div class="a" style="left:683px;top:444px;width:277px;height:23px;background:#f4f4f4"></div>
<div class="a" style="left:961px;top:444px;width:157px;height:23px;background:#e3e9fb"></div>
<div class="a" style="left:683px;top:467px;width:435px;height:1px;background:#7ea6dc"></div>
<div class="a" style="left:960px;top:443px;width:1px;height:25px;background:#7ea6dc"></div>
<div class="a" style="left:1118px;top:443px;width:1px;height:25px;background:#7ea6dc"></div>
<div class="a" style="left:682px;top:443px;width:1px;height:25px;background:#7ea6dc"></div>
<svg style="left:684px;top:449px" width="17" height="17" viewBox="0 0 17 17"><path d="M1 2.5h4l1 1.5h8.5v9.5h-13.5z" fill="#fff2b0" stroke="#c89010" stroke-width="1.2"/><rect x="1.5" y="10" width="13" height="3.5" fill="#f8d040"/><rect x="3" y="4.5" width="10" height="6" fill="#2a8a2a"/><rect x="5" y="5" width="7" height="4" fill="#50b040"/><rect x="3" y="5" width="2" height="5" fill="#e8f4d0"/><rect x="13" y="4" width="3" height="2" fill="#2a8a2a"/></svg>
<div class="a t" style="left:703px;top:445px;font-size:12.6px;line-height:18px;color:#000">FBDoor</div>
<div class="a" style="left:683px;top:468px;width:277px;height:23px;background:#0078d7"></div>
<div class="a" style="left:961px;top:468px;width:157px;height:23px;background:#0078d7"></div>
<div class="a" style="left:683px;top:491px;width:435px;height:1px;background:#7ea6dc"></div>
<div class="a" style="left:960px;top:467px;width:1px;height:25px;background:#7ea6dc"></div>
<div class="a" style="left:1118px;top:467px;width:1px;height:25px;background:#7ea6dc"></div>
<div class="a" style="left:682px;top:467px;width:1px;height:25px;background:#7ea6dc"></div>
<svg style="left:684px;top:473px" width="17" height="17" viewBox="0 0 17 17"><path d="M1 2.5h4l1 1.5h8.5v9.5h-13.5z" fill="#fff2b0" stroke="#c89010" stroke-width="1.2"/><rect x="1.5" y="10" width="13" height="3.5" fill="#f8d040"/><rect x="3" y="4.5" width="10" height="6" fill="#2a8a2a"/><rect x="5" y="5" width="7" height="4" fill="#50b040"/><rect x="3" y="5" width="2" height="5" fill="#e8f4d0"/><rect x="13" y="4" width="3" height="2" fill="#2a8a2a"/></svg>
<div class="a t" style="left:703px;top:469px;font-size:12.6px;line-height:18px;color:#fff">FBLight</div>
<div class="a" style="left:683px;top:492px;width:277px;height:23px;background:#f4f4f4"></div>
<div class="a" style="left:961px;top:492px;width:157px;height:23px;background:#e3e9fb"></div>
<div class="a" style="left:683px;top:515px;width:435px;height:1px;background:#7ea6dc"></div>
<div class="a" style="left:960px;top:491px;width:1px;height:25px;background:#7ea6dc"></div>
<div class="a" style="left:1118px;top:491px;width:1px;height:25px;background:#7ea6dc"></div>
<div class="a" style="left:682px;top:491px;width:1px;height:25px;background:#7ea6dc"></div>
<svg style="left:684px;top:497px" width="17" height="17" viewBox="0 0 17 17"><path d="M1 2.5h4l1 1.5h8.5v9.5h-13.5z" fill="#efe6c0" stroke="#b09a60" stroke-width="1"/><rect x="3" y="5" width="9" height="5" fill="#9cc090"/><rect x="3" y="5" width="2" height="5" fill="#e0f0d8"/><rect x="9" y="9" width="7" height="6" fill="#222"/><path d="M10.5 9v-1.5a2 2 0 0 1 4 0v1.5" fill="none" stroke="#333" stroke-width="1.2"/><rect x="12" y="11" width="1.5" height="2" fill="#aaa"/></svg>
<div class="a t" style="left:703px;top:493px;font-size:12.6px;line-height:18px;color:#000">FBMotion_16ET_H</div>
<svg style="left:964px;top:499px" width="11" height="12" viewBox="0 0 12 13"><path d="M3 6V4a3 3 0 0 1 6 0v2" fill="none" stroke="#b08a20" stroke-width="1.5"/><rect x="1" y="6" width="10" height="7" fill="#f0b828" stroke="#a07810" stroke-width="0.8"/><rect x="2" y="9" width="8" height="1" fill="#ffe890"/></svg>
<div class="a t" style="left:982px;top:492px;font-size:15px;line-height:18px;color:#000">已登录</div>
<div class="a" style="left:683px;top:516px;width:277px;height:23px;background:#f4f4f4"></div>
<div class="a" style="left:961px;top:516px;width:157px;height:23px;background:#fff"></div>
<div class="a" style="left:683px;top:539px;width:435px;height:1px;background:#7ea6dc"></div>
<div class="a" style="left:960px;top:515px;width:1px;height:25px;background:#7ea6dc"></div>
<div class="a" style="left:1118px;top:515px;width:1px;height:25px;background:#7ea6dc"></div>
<div class="a" style="left:682px;top:515px;width:1px;height:25px;background:#7ea6dc"></div>
<svg style="left:684px;top:521px" width="17" height="17" viewBox="0 0 17 17"><path d="M1 2.5h4l1 1.5h8.5v9.5h-13.5z" fill="#efe6c0" stroke="#b09a60" stroke-width="1"/><rect x="3" y="5" width="9" height="5" fill="#9cc090"/><rect x="3" y="5" width="2" height="5" fill="#e0f0d8"/><rect x="9" y="9" width="7" height="6" fill="#222"/><path d="M10.5 9v-1.5a2 2 0 0 1 4 0v1.5" fill="none" stroke="#333" stroke-width="1.2"/><rect x="12" y="11" width="1.5" height="2" fill="#aaa"/></svg>
<div class="a t" style="left:703px;top:517px;font-size:12.6px;line-height:18px;color:#000">FBVacuum</div>
<svg style="left:964px;top:523px" width="11" height="12" viewBox="0 0 12 13"><path d="M3 6V4a3 3 0 0 1 6 0v2" fill="none" stroke="#b08a20" stroke-width="1.5"/><rect x="1" y="6" width="10" height="7" fill="#f0b828" stroke="#a07810" stroke-width="0.8"/><rect x="2" y="9" width="8" height="1" fill="#ffe890"/></svg>
<div class="a t" style="left:982px;top:516px;font-size:15px;line-height:18px;color:#000">已登录</div>
<div class="a" style="left:683px;top:540px;width:277px;height:23px;background:#f4f4f4"></div>
<div class="a" style="left:961px;top:540px;width:157px;height:23px;background:#e3e9fb"></div>
<div class="a" style="left:683px;top:563px;width:435px;height:1px;background:#7ea6dc"></div>
<div class="a" style="left:960px;top:539px;width:1px;height:25px;background:#7ea6dc"></div>
<div class="a" style="left:1118px;top:539px;width:1px;height:25px;background:#7ea6dc"></div>
<div class="a" style="left:682px;top:539px;width:1px;height:25px;background:#7ea6dc"></div>
<svg style="left:684px;top:545px" width="17" height="17" viewBox="0 0 17 17"><path d="M1 2.5h4l1 1.5h8.5v9.5h-13.5z" fill="#fff2b0" stroke="#c89010" stroke-width="1.2"/><rect x="1.5" y="10" width="13" height="3.5" fill="#f8d040"/><rect x="3" y="4.5" width="10" height="6" fill="#2a8a2a"/><rect x="5" y="5" width="7" height="4" fill="#50b040"/><rect x="3" y="5" width="2" height="5" fill="#e8f4d0"/><rect x="13" y="4" width="3" height="2" fill="#2a8a2a"/></svg>
<div class="a t" style="left:703px;top:541px;font-size:12.6px;line-height:18px;color:#000">FBwCT</div>
<div class="a" style="left:683px;top:564px;width:277px;height:23px;background:#f4f4f4"></div>
<div class="a" style="left:961px;top:564px;width:157px;height:23px;background:#fff"></div>
<div class="a" style="left:683px;top:587px;width:435px;height:1px;background:#7ea6dc"></div>
<div class="a" style="left:960px;top:563px;width:1px;height:25px;background:#7ea6dc"></div>
<div class="a" style="left:1118px;top:563px;width:1px;height:25px;background:#7ea6dc"></div>
<div class="a" style="left:682px;top:563px;width:1px;height:25px;background:#7ea6dc"></div>
<svg style="left:684px;top:569px" width="17" height="17" viewBox="0 0 17 17"><path d="M1 2.5h4l1 1.5h8.5v9.5h-13.5z" fill="#fff2b0" stroke="#c89010" stroke-width="1.2"/><rect x="1.5" y="10" width="13" height="3.5" fill="#f8d040"/><rect x="3" y="4.5" width="10" height="6" fill="#2a8a2a"/><rect x="5" y="5" width="7" height="4" fill="#50b040"/><rect x="3" y="5" width="2" height="5" fill="#e8f4d0"/><rect x="13" y="4" width="3" height="2" fill="#2a8a2a"/></svg>
<div class="a t" style="left:703px;top:565px;font-size:12.6px;line-height:18px;color:#000">FBwMoudleTimer</div>
<div class="a" style="left:683px;top:588px;width:277px;height:23px;background:#f4f4f4"></div>
<div class="a" style="left:961px;top:588px;width:157px;height:23px;background:#e3e9fb"></div>
<div class="a" style="left:683px;top:611px;width:435px;height:1px;background:#7ea6dc"></div>
<div class="a" style="left:960px;top:587px;width:1px;height:25px;background:#7ea6dc"></div>
<div class="a" style="left:1118px;top:587px;width:1px;height:25px;background:#7ea6dc"></div>
<div class="a" style="left:682px;top:587px;width:1px;height:25px;background:#7ea6dc"></div>
<svg style="left:684px;top:593px" width="17" height="17" viewBox="0 0 17 17"><path d="M1 5h14v10H1z" fill="#e8c050" stroke="#8a6010" stroke-width="0.8"/><rect x="3" y="1" width="11" height="13" fill="#fff" stroke="#666" stroke-width="0.8"/><rect x="5" y="5" width="7" height="6" fill="#d02020"/></svg>
<div class="a t" style="left:703px;top:589px;font-size:12.6px;line-height:18px;color:#000">IO核对</div>
<div class="a" style="left:683px;top:612px;width:277px;height:23px;background:#f4f4f4"></div>
<div class="a" style="left:961px;top:612px;width:157px;height:23px;background:#fff"></div>
<div class="a" style="left:683px;top:635px;width:435px;height:1px;background:#7ea6dc"></div>
<div class="a" style="left:960px;top:611px;width:1px;height:25px;background:#7ea6dc"></div>
<div class="a" style="left:1118px;top:611px;width:1px;height:25px;background:#7ea6dc"></div>
<div class="a" style="left:682px;top:611px;width:1px;height:25px;background:#7ea6dc"></div>
<svg style="left:684px;top:617px" width="17" height="17" viewBox="0 0 17 17"><path d="M1 2.5h4l1 1.5h8.5v9.5h-13.5z" fill="#efe6c0" stroke="#b09a60" stroke-width="1"/><rect x="3" y="5" width="9" height="5" fill="#9cc090"/><rect x="3" y="5" width="2" height="5" fill="#e0f0d8"/><rect x="9" y="9" width="7" height="6" fill="#222"/><path d="M10.5 9v-1.5a2 2 0 0 1 4 0v1.5" fill="none" stroke="#333" stroke-width="1.2"/><rect x="12" y="11" width="1.5" height="2" fill="#aaa"/></svg>
<div class="a t" style="left:703px;top:613px;font-size:12.6px;line-height:18px;color:#000">S_STW</div>
<svg style="left:964px;top:619px" width="11" height="12" viewBox="0 0 12 13"><path d="M3 6V4a3 3 0 0 1 6 0v2" fill="none" stroke="#b08a20" stroke-width="1.5"/><rect x="1" y="6" width="10" height="7" fill="#f0b828" stroke="#a07810" stroke-width="0.8"/><rect x="2" y="9" width="8" height="1" fill="#ffe890"/></svg>
<div class="a t" style="left:982px;top:612px;font-size:15px;line-height:18px;color:#000">已登录</div>
<div class="a" style="left:683px;top:636px;width:277px;height:23px;background:#f4f4f4"></div>
<div class="a" style="left:961px;top:636px;width:157px;height:23px;background:#e3e9fb"></div>
<div class="a" style="left:683px;top:659px;width:435px;height:1px;background:#7ea6dc"></div>
<div class="a" style="left:960px;top:635px;width:1px;height:25px;background:#7ea6dc"></div>
<div class="a" style="left:1118px;top:635px;width:1px;height:25px;background:#7ea6dc"></div>
<div class="a" style="left:682px;top:635px;width:1px;height:25px;background:#7ea6dc"></div>
<svg style="left:684px;top:641px" width="17" height="17" viewBox="0 0 17 17"><path d="M1 5h14v10H1z" fill="#e8c050" stroke="#8a6010" stroke-width="0.8"/><rect x="3" y="2" width="11" height="12" fill="#eee" stroke="#444" stroke-width="0.8"/><text x="4" y="11" font-size="6" font-family="Liberation Sans" font-weight="bold" fill="#111">ST</text></svg>
<div class="a t" style="left:703px;top:637px;font-size:15px;line-height:18px;color:#000">报警弹窗显示</div>
<div class="a" style="left:1197px;top:391px;width:19px;height:268px;background:#f0f0f0"></div>
<div class="a" style="left:1197px;top:412px;width:19px;height:145px;background:#c8c8c8"></div>
<svg style="left:1200px;top:396px" width="12" height="8" viewBox="0 0 12 8"><path d="M1 7l5-5 5 5" fill="none" stroke="#555" stroke-width="1.8"/></svg>
<svg style="left:1200px;top:644px" width="12" height="8" viewBox="0 0 12 8"><path d="M1 1l5 5 5-5" fill="none" stroke="#555" stroke-width="1.8"/></svg>
<div class="a" style="left:682px;top:659px;width:534px;height:1px;background:#828790"></div>
<div class="a" style="left:724px;top:673px;width:115px;height:26px;background:#e1e1e1;border:2px solid #0078d7;font-size:15px;line-height:24px;text-align:center;color:#000;white-space:pre"><span style="font-size:15px">登</span><span style="font-size:15px">录</span><span style="font-family:Liberation Mono;font-size:12.5px">(</span><span style="font-family:Liberation Mono;font-size:12.5px">R</span><span style="font-family:Liberation Mono;font-size:12.5px">)</span><span style="font-family:Liberation Mono;font-size:12.5px">.</span><span style="font-family:Liberation Mono;font-size:12.5px">.</span><span style="font-family:Liberation Mono;font-size:12.5px">.</span></div>
<div class="a" style="left:848px;top:674px;width:115px;height:25px;background:#cccccc;border:1px solid #bfbfbf;font-size:15px;line-height:23px;text-align:center;color:#838383;white-space:pre"><span style="font-size:15px">更</span><span style="font-size:15px">改</span><span style="font-family:Liberation Mono;font-size:12.5px">(</span><span style="font-family:Liberation Mono;font-size:12.5px">C</span><span style="font-family:Liberation Mono;font-size:12.5px">)</span><span style="font-family:Liberation Mono;font-size:12.5px">.</span><span style="font-family:Liberation Mono;font-size:12.5px">.</span><span style="font-family:Liberation Mono;font-size:12.5px">.</span></div>
<div class="a" style="left:976px;top:674px;width:115px;height:25px;background:#cccccc;border:1px solid #bfbfbf;font-size:15px;line-height:23px;text-align:center;color:#838383;white-space:pre"><span style="font-size:15px">认</span><span style="font-size:15px">证</span><span style="font-family:Liberation Mono;font-size:12.5px">(</span><span style="font-family:Liberation Mono;font-size:12.5px">A</span><span style="font-family:Liberation Mono;font-size:12.5px">)</span><span style="font-family:Liberation Mono;font-size:12.5px">.</span><span style="font-family:Liberation Mono;font-size:12.5px">.</span><span style="font-family:Liberation Mono;font-size:12.5px">.</span></div>
<div class="a" style="left:1102px;top:674px;width:115px;height:25px;background:#cccccc;border:1px solid #bfbfbf;font-size:15px;line-height:23px;text-align:center;color:#838383;white-space:pre"><span style="font-size:15px">删</span><span style="font-size:15px">除</span><span style="font-family:Liberation Mono;font-size:12.5px">(</span><span style="font-family:Liberation Mono;font-size:12.5px">D</span><span style="font-family:Liberation Mono;font-size:12.5px">)</span><span style="font-family:Liberation Mono;font-size:12.5px">.</span><span style="font-family:Liberation Mono;font-size:12.5px">.</span><span style="font-family:Liberation Mono;font-size:12.5px">.</span></div>
<div class="a" style="left:976px;top:711px;width:115px;height:26px;background:#e1e1e1;border:1px solid #8ea2b4;font-size:15px;line-height:24px;text-align:center;color:#000;white-space:pre"><span style="font-size:15px">确</span><span style="font-size:15px">定</span></div>
<div class="a" style="left:1102px;top:711px;width:115px;height:26px;background:#e1e1e1;border:1px solid #8ea2b4;font-size:15px;line-height:24px;text-align:center;color:#000;white-space:pre"><span style="font-size:15px">取</span><span style="font-size:15px">消</span></div>
<div class="a" style="left:975px;top:993px;width:1px;height:4px;background:#c8ccd4"></div>
<div class="a" style="left:1160px;top:993px;width:1px;height:4px;background:#c8ccd4"></div></body></html>
